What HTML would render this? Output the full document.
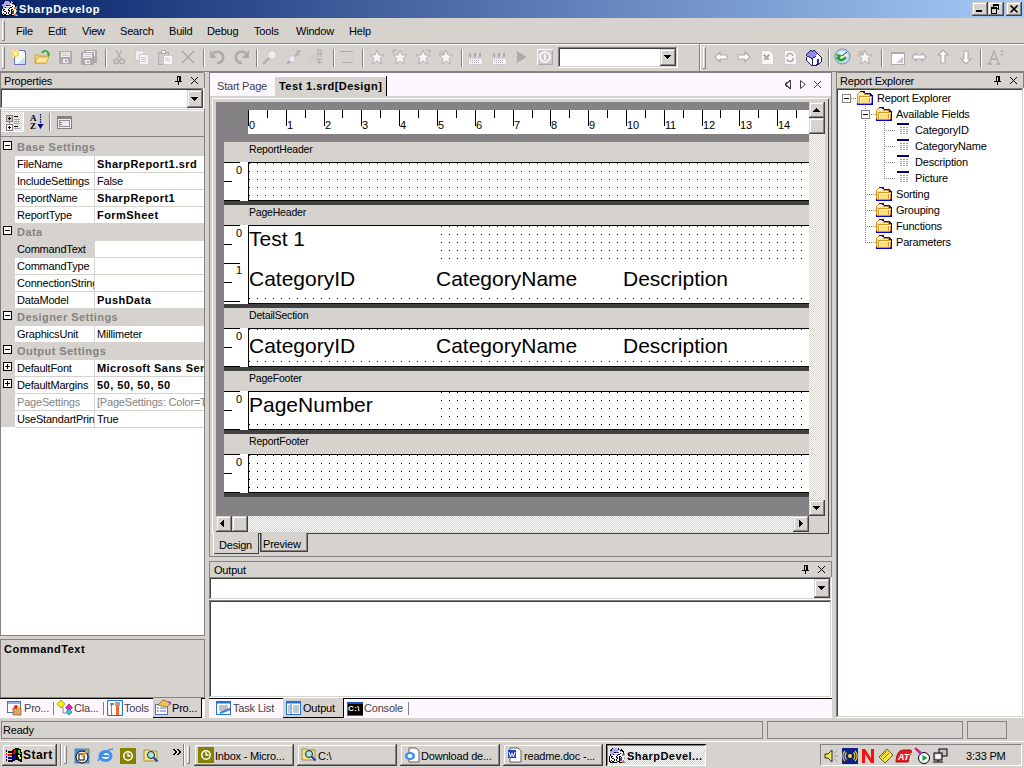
<!DOCTYPE html><html><head><meta charset="utf-8"><style>html,body{margin:0;padding:0;width:1024px;height:768px;overflow:hidden;background:#D6D2CE;position:relative}div{position:absolute;box-sizing:border-box}.t{line-height:0;white-space:nowrap;font-family:"Liberation Sans",sans-serif;font-size:11px;color:#000000;letter-spacing:-0.2px}svg{position:absolute}</style></head><body><div style="left:0px;top:0px;width:1024px;height:18px;background:linear-gradient(to right,#08246B,#A5CAF7)"></div><svg style="position:absolute;left:1px;top:0px" width="18" height="16" viewBox="0 0 18 16" shape-rendering="crispEdges"><path d="M3 1h1v1h-1zM9 1h1v1h-1zM2 2h1v1h-1zM9 2h1v1h-1zM12 2h1v1h-1zM1 3h2v1h-2zM11 3h3v1h-3zM13 4h2v1h-2zM5 5h2v1h-2zM14 5h1v1h-1zM11 6h1v1h-1zM14 6h1v1h-1zM1 7h1v1h-1zM4 7h1v1h-1zM9 7h2v1h-2zM1 8h1v1h-1zM8 8h1v1h-1zM0 9h1v1h-1zM2 9h2v1h-2zM7 9h1v1h-1zM10 9h2v1h-2zM0 10h1v1h-1zM2 10h1v1h-1zM7 10h2v1h-2zM10 10h1v1h-1zM0 11h1v1h-1zM3 11h2v1h-2zM8 11h1v1h-1zM10 11h1v1h-1zM0 12h1v1h-1zM5 12h1v1h-1zM7 12h1v1h-1zM10 12h1v1h-1zM0 13h1v1h-1zM2 13h1v1h-1zM5 13h1v1h-1zM7 13h1v1h-1zM10 13h1v1h-1zM0 14h2v1h-2zM3 14h2v1h-2zM8 14h3v1h-3zM1 15h7v1h-7zM10 15h3v1h-3z" fill="#000000"/><path d="M4 1h4v1h-4zM10 1h1v1h-1zM3 2h6v1h-6zM10 2h2v1h-2zM3 3h8v1h-8zM1 4h8v1h-8zM11 4h2v1h-2zM1 5h4v1h-4zM2 6h3v1h-3zM2 7h2v1h-2zM5 7h4v1h-4z" fill="#ADAAF7"/><path d="M9 4h2v1h-2zM10 5h4v1h-4zM5 6h6v1h-6zM13 6h1v1h-1zM11 7h2v1h-2zM2 8h6v1h-6zM9 8h4v1h-4zM1 9h1v1h-1zM4 9h3v1h-3zM8 9h2v1h-2zM12 9h3v1h-3zM1 10h1v1h-1zM3 10h4v1h-4zM9 10h1v1h-1zM13 10h2v1h-2zM1 11h2v1h-2zM5 11h3v1h-3zM9 11h1v1h-1zM13 11h2v1h-2zM1 12h4v1h-4zM6 12h1v1h-1zM8 12h2v1h-2zM13 12h2v1h-2zM1 13h1v1h-1zM3 13h2v1h-2zM6 13h1v1h-1zM8 13h2v1h-2zM13 13h1v1h-1zM2 14h1v1h-1zM5 14h3v1h-3zM11 14h2v1h-2z" fill="#FFFFFF"/><path d="M7 5h3v1h-3zM12 10h1v1h-1zM11 11h2v1h-2zM11 12h2v1h-2zM11 13h2v1h-2z" fill="#424184"/><path d="M12 6h1v1h-1zM11 10h1v1h-1z" fill="#F7F321"/><path d="M15 6h1v1h-1zM13 7h1v1h-1zM15 7h1v1h-1zM15 8h1v1h-1zM15 10h1v1h-1zM15 11h1v1h-1zM15 14h1v1h-1zM15 15h2v1h-2z" fill="#A5A2A5"/><path d="M14 7h1v1h-1zM13 8h2v1h-2zM14 13h1v1h-1zM13 14h2v1h-2zM13 15h2v1h-2z" fill="#F76110"/></svg><div class="t" style="left:19px;top:9px;font-size:11px;font-weight:bold;letter-spacing:0.45px;color:#FFFFFF;letter-spacing:0.6px">SharpDevelop</div><div style="left:972px;top:2px;width:16px;height:14px;background:#D6D2CE;box-shadow:inset -1px -1px #424142,inset 1px 1px #D6D2CE,inset -2px -2px #848284,inset 2px 2px #FFFFFF"></div><div style="left:988px;top:2px;width:16px;height:14px;background:#D6D2CE;box-shadow:inset -1px -1px #424142,inset 1px 1px #D6D2CE,inset -2px -2px #848284,inset 2px 2px #FFFFFF"></div><div style="left:1006px;top:2px;width:16px;height:14px;background:#D6D2CE;box-shadow:inset -1px -1px #424142,inset 1px 1px #D6D2CE,inset -2px -2px #848284,inset 2px 2px #FFFFFF"></div><svg style="position:absolute;left:976px;top:2px" width="10" height="14" viewBox="0 0 10 14" shape-rendering="crispEdges"><rect x="0" y="8" width="6" height="2" fill="#000000"/></svg><svg style="position:absolute;left:990px;top:2px" width="12" height="14" viewBox="0 0 12 14" shape-rendering="crispEdges"><rect x="3" y="2" width="6" height="2" fill="#000000"/><rect x="8" y="4" width="1" height="4" fill="#000000"/><rect x="7" y="6" width="2" height="1" fill="#000000"/><rect x="1" y="5" width="6" height="2" fill="#000000"/><rect x="1" y="7" width="1" height="4" fill="#000000"/><rect x="6" y="7" width="1" height="4" fill="#000000"/><rect x="1" y="11" width="6" height="1" fill="#000000"/><rect x="3" y="2" width="1" height="3" fill="#000000"/></svg><svg style="position:absolute;left:1006px;top:2px" width="16" height="14" viewBox="0 0 16 14"><path d="M4.5 3.5 L11.5 10.5 M11.5 3.5 L4.5 10.5" stroke="#000000" stroke-width="1.6"/></svg><div style="left:0px;top:18px;width:1024px;height:25px;background:#D6D2CE"></div><div style="left:2px;top:21px;width:3px;height:20px;box-shadow:inset -1px -1px #848284,inset 1px 1px #FFFFFF"></div><div style="left:0px;top:43px;width:1024px;height:1px;background:#848284"></div><div style="left:0px;top:44px;width:1024px;height:1px;background:#FFFFFF"></div><div class="t" style="left:16px;top:31px;font-size:11px;color:#000000;">File</div><div class="t" style="left:48px;top:31px;font-size:11px;color:#000000;">Edit</div><div class="t" style="left:82px;top:31px;font-size:11px;color:#000000;">View</div><div class="t" style="left:120px;top:31px;font-size:11px;color:#000000;">Search</div><div class="t" style="left:169px;top:31px;font-size:11px;color:#000000;">Build</div><div class="t" style="left:207px;top:31px;font-size:11px;color:#000000;">Debug</div><div class="t" style="left:254px;top:31px;font-size:11px;color:#000000;">Tools</div><div class="t" style="left:296px;top:31px;font-size:11px;color:#000000;">Window</div><div class="t" style="left:349px;top:31px;font-size:11px;color:#000000;">Help</div><div style="left:2px;top:47px;width:3px;height:22px;box-shadow:inset -1px -1px #848284,inset 1px 1px #FFFFFF"></div><div style="left:0px;top:71px;width:1024px;height:1px;background:#848284"></div><div style="left:0px;top:72px;width:204px;height:1px;background:#848284"></div><div style="left:209px;top:72px;width:623px;height:1px;background:#848284"></div><div style="left:836px;top:72px;width:188px;height:1px;background:#848284"></div><div style="left:105px;top:49px;width:1px;height:18px;background:#848284"></div><div style="left:106px;top:49px;width:1px;height:18px;background:#FFFFFF"></div><div style="left:203px;top:49px;width:1px;height:18px;background:#848284"></div><div style="left:204px;top:49px;width:1px;height:18px;background:#FFFFFF"></div><div style="left:256px;top:49px;width:1px;height:18px;background:#848284"></div><div style="left:257px;top:49px;width:1px;height:18px;background:#FFFFFF"></div><div style="left:333px;top:49px;width:1px;height:18px;background:#848284"></div><div style="left:334px;top:49px;width:1px;height:18px;background:#FFFFFF"></div><div style="left:362px;top:49px;width:1px;height:18px;background:#848284"></div><div style="left:363px;top:49px;width:1px;height:18px;background:#FFFFFF"></div><div style="left:461px;top:49px;width:1px;height:18px;background:#848284"></div><div style="left:462px;top:49px;width:1px;height:18px;background:#FFFFFF"></div><div style="left:828px;top:49px;width:1px;height:18px;background:#848284"></div><div style="left:829px;top:49px;width:1px;height:18px;background:#FFFFFF"></div><div style="left:881px;top:49px;width:1px;height:18px;background:#848284"></div><div style="left:882px;top:49px;width:1px;height:18px;background:#FFFFFF"></div><div style="left:980px;top:49px;width:1px;height:18px;background:#848284"></div><div style="left:981px;top:49px;width:1px;height:18px;background:#FFFFFF"></div><div style="left:699px;top:44px;width:1px;height:27px;background:#848284"></div><div style="left:700px;top:44px;width:1px;height:27px;background:#FFFFFF"></div><div style="left:703px;top:47px;width:3px;height:22px;box-shadow:inset -1px -1px #848284,inset 1px 1px #FFFFFF"></div><div style="left:558px;top:47px;width:120px;height:21px;background:#FFFFFF;box-shadow:inset -1px -1px #FFFFFF,inset 1px 1px #848284,inset -2px -2px #D6D2CE,inset 2px 2px #424142"></div><div style="left:660px;top:49px;width:16px;height:17px;background:#D6D2CE;box-shadow:inset -1px -1px #424142,inset 1px 1px #D6D2CE,inset -2px -2px #848284,inset 2px 2px #FFFFFF"></div><svg style="position:absolute;left:664px;top:55px" width="7" height="4" viewBox="0 0 7 4" shape-rendering="crispEdges"><path d="M0 0h7v1h-1v1h-1v1h-1v1h-1v-1h-1v-1h-1v-1h-1z" fill="#000000"/></svg><svg style="position:absolute;left:11px;top:49px" width="16" height="16" viewBox="0 0 16 16" shape-rendering="crispEdges"><path d="M1 1h3v1h-3zM5 1h3v1h-3zM1 2h1v1h-1zM3 2h3v1h-3zM7 2h1v1h-1zM1 3h7v1h-7zM2 4h2v1h-2zM5 4h2v1h-2zM1 5h7v1h-7zM1 6h1v1h-1zM3 6h3v1h-3zM7 6h1v1h-1zM1 7h3v1h-3zM5 7h3v1h-3z" fill="#FFEB94"/><path d="M4 1h1v1h-1zM2 2h1v1h-1zM6 2h1v1h-1zM1 4h1v1h-1zM7 4h1v1h-1zM2 6h1v1h-1zM6 6h1v1h-1zM4 7h1v1h-1z" fill="#F7A231"/><path d="M8 1h5v1h-5zM14 3h1v1h-1zM14 4h1v1h-1zM14 5h1v1h-1zM14 6h1v1h-1zM14 7h1v1h-1zM3 8h1v1h-1zM14 8h1v1h-1zM3 9h1v1h-1zM14 9h1v1h-1zM3 10h1v1h-1zM14 10h1v1h-1zM3 11h1v1h-1zM14 11h1v1h-1zM3 12h1v1h-1zM14 12h1v1h-1zM3 13h1v1h-1zM14 13h1v1h-1zM3 14h1v1h-1zM14 14h1v1h-1zM3 15h12v1h-12z" fill="#7371BD"/><path d="M13 1h1v1h-1zM13 2h2v1h-2z" fill="#5292E6"/><path d="M8 2h5v1h-5zM8 3h6v1h-6zM8 4h6v1h-6zM8 5h6v1h-6zM8 6h6v1h-6zM8 7h6v1h-6zM4 8h10v1h-10zM4 9h8v1h-8zM13 9h1v1h-1zM4 10h7v1h-7zM4 11h6v1h-6zM4 12h5v1h-5zM4 13h4v1h-4zM4 14h3v1h-3z" fill="#EFF7FF"/><path d="M4 4h1v1h-1z" fill="#FFFFFF"/><path d="M12 9h1v1h-1zM11 10h3v1h-3zM10 11h4v1h-4zM9 12h5v1h-5zM8 13h6v1h-6zM7 14h7v1h-7z" fill="#C5E3FF"/></svg><svg style="position:absolute;left:34px;top:49px" width="17" height="16" viewBox="0 0 17 16"><path d="M1 6h5l1 1h5v7H1z" fill="#F7D27B" stroke="#CE9A29" stroke-width="0.8"/><path d="M1 14l3-6h11l-3 6z" fill="#FFE79C" stroke="#CE9A29" stroke-width="0.8"/><path d="M8 4c2-3 5-3 7 1" fill="none" stroke="#3AAA3A" stroke-width="2"/><path d="M12.5 5l4 0-2 3z" fill="#3AAA3A"/></svg><svg style="position:absolute;left:58px;top:49px" width="16" height="16" viewBox="0 0 16 16" shape-rendering="crispEdges"><rect x="1" y="2" width="13" height="13" fill="#ADAAAD"/><rect x="3" y="3" width="9" height="5" fill="#EFEBEF"/><rect x="4" y="4" width="7" height="1" fill="#CECACE"/><rect x="4" y="6" width="7" height="1" fill="#CECACE"/><rect x="5" y="10" width="5" height="4" fill="#EFEBEF"/><rect x="7" y="11" width="2" height="2" fill="#ADAAAD"/></svg><svg style="position:absolute;left:83px;top:48px" width="16" height="16" viewBox="0 0 16 16" shape-rendering="crispEdges"><rect x="1" y="2" width="13" height="13" fill="#ADAAAD"/><rect x="3" y="3" width="9" height="5" fill="#EFEBEF"/><rect x="4" y="4" width="7" height="1" fill="#CECACE"/><rect x="4" y="6" width="7" height="1" fill="#CECACE"/><rect x="5" y="10" width="5" height="4" fill="#EFEBEF"/><rect x="7" y="11" width="2" height="2" fill="#ADAAAD"/></svg><svg style="position:absolute;left:80px;top:50px" width="16" height="16" viewBox="0 0 16 16" shape-rendering="crispEdges"><rect x="1" y="2" width="13" height="13" fill="#ADAAAD"/><rect x="3" y="3" width="9" height="5" fill="#EFEBEF"/><rect x="4" y="4" width="7" height="1" fill="#CECACE"/><rect x="4" y="6" width="7" height="1" fill="#CECACE"/><rect x="5" y="10" width="5" height="4" fill="#EFEBEF"/><rect x="7" y="11" width="2" height="2" fill="#ADAAAD"/></svg><svg style="position:absolute;left:112px;top:49px" width="14" height="16" viewBox="0 0 14 16"><path d="M4 1l5 9M10 1L5 10" stroke="#ADAAAD" stroke-width="1.2"/><circle cx="4" cy="12.5" r="2.3" fill="none" stroke="#ADAAAD" stroke-width="1.3"/><circle cx="10" cy="12.5" r="2.3" fill="none" stroke="#ADAAAD" stroke-width="1.3"/></svg><svg style="position:absolute;left:134px;top:49px" width="16" height="16" viewBox="0 0 16 16" shape-rendering="crispEdges"><rect x="1" y="1" width="8" height="10" fill="#EFEBEF" stroke="#CECACE"/><rect x="5" y="5" width="9" height="10" fill="#F7F3F7" stroke="#CECACE"/><path d="M7 8h5M7 10h5M7 12h5" stroke="#CECACE"/></svg><svg style="position:absolute;left:157px;top:49px" width="16" height="16" viewBox="0 0 16 16" shape-rendering="crispEdges"><rect x="1" y="3" width="10" height="12" fill="#CECACE" stroke="#ADAAAD"/><rect x="4" y="1" width="4" height="3" fill="#EFEBEF" stroke="#ADAAAD"/><rect x="6" y="6" width="9" height="9" fill="#F7F3F7" stroke="#CECACE"/><path d="M8 9h5M8 11h5" stroke="#CECACE"/></svg><svg style="position:absolute;left:180px;top:49px" width="16" height="16" viewBox="0 0 16 16"><path d="M2 2l12 12M14 2L2 14" stroke="#ADAAAD" stroke-width="1.6"/></svg><svg style="position:absolute;left:209px;top:49px" width="17" height="16" viewBox="0 0 17 16"><path d="M4 4c6-3 11 0 10 6c-1 3-4 4-6 4" fill="none" stroke="#ADAAAD" stroke-width="2.6"/><path d="M1 1v8h7z" fill="#ADAAAD"/></svg><svg style="position:absolute;left:233px;top:49px" width="17" height="16" viewBox="0 0 17 16"><path d="M13 4c-6-3-11 0-10 6c1 3 4 4 6 4" fill="none" stroke="#ADAAAD" stroke-width="2.6"/><path d="M16 1v8h-7z" fill="#ADAAAD"/></svg><svg style="position:absolute;left:262px;top:49px" width="16" height="16" viewBox="0 0 16 16"><circle cx="10" cy="6" r="4.5" fill="#EFEBEF" stroke="#CECACE" stroke-width="1.5"/><path d="M7 9l-6 6" stroke="#ADAAAD" stroke-width="2"/></svg><svg style="position:absolute;left:286px;top:49px" width="16" height="16" viewBox="0 0 16 16"><circle cx="6" cy="10" r="3.5" fill="#EFEBEF" stroke="#CECACE" stroke-width="1.5"/><path d="M4 12l-3 3" stroke="#ADAAAD" stroke-width="2"/><path d="M10 2h4l-4 4h4M9 7l3-3" stroke="#ADAAAD" stroke-width="1.2" fill="none"/></svg><svg style="position:absolute;left:308px;top:49px" width="17" height="16" viewBox="0 0 17 16"><text x="0" y="12" font-family="Liberation Sans" font-size="12" font-weight="bold" fill="#CECACE">a</text><path d="M9 1h5M10 1v7M13 1v7M9 5h5M8 10h7M11 10v5M9 13h5" stroke="#ADAAAD" stroke-width="1" fill="none"/></svg><svg style="position:absolute;left:339px;top:49px" width="16" height="16" viewBox="0 0 16 16" shape-rendering="crispEdges"><rect x="1" y="2" width="13" height="1" fill="#ADAAAD"/><rect x="5" y="6" width="9" height="1" fill="#CECACE"/><rect x="5" y="9" width="9" height="1" fill="#CECACE"/><rect x="3" y="13" width="11" height="1" fill="#ADAAAD"/></svg><svg style="position:absolute;left:369px;top:49px" width="16" height="16" viewBox="0 0 16 16"><path d="M8 1l2 5h5l-4 3.5 1.5 5.5L8 12l-4.5 3 1.5-5.5L1 6h5z" fill="#F7F3F7" stroke="#ADAAAD" stroke-width="0.9"/></svg><svg style="position:absolute;left:392px;top:49px" width="16" height="16" viewBox="0 0 16 16"><path d="M8 1l2 5h5l-4 3.5 1.5 5.5L8 12l-4.5 3 1.5-5.5L1 6h5z" fill="#F7F3F7" stroke="#ADAAAD" stroke-width="0.9"/><path d="M1 1h4M1 1v3" stroke="#ADAAAD"/></svg><svg style="position:absolute;left:415px;top:49px" width="16" height="16" viewBox="0 0 16 16"><path d="M8 1l2 5h5l-4 3.5 1.5 5.5L8 12l-4.5 3 1.5-5.5L1 6h5z" fill="#F7F3F7" stroke="#ADAAAD" stroke-width="0.9"/><path d="M11 1h4v3" stroke="#ADAAAD" fill="none"/></svg><svg style="position:absolute;left:438px;top:49px" width="16" height="16" viewBox="0 0 16 16"><path d="M8 1l2 5h5l-4 3.5 1.5 5.5L8 12l-4.5 3 1.5-5.5L1 6h5z" fill="#F7F3F7" stroke="#ADAAAD" stroke-width="0.9"/><text x="1" y="6" font-size="5" fill="#ADAAAD" font-family="Liberation Sans">30</text></svg><svg style="position:absolute;left:467px;top:49px" width="16" height="16" viewBox="0 0 16 16" shape-rendering="crispEdges"><rect x="1" y="9" width="14" height="6" fill="#F7F7F7" stroke="#CECACE"/><path d="M3 11h1M5 11h1M7 11h1M9 11h1M11 11h1M3 13h1M5 13h1M7 13h1M9 13h1M11 13h1" stroke="#ADAAAD"/><path d="M3 4v4M8 4v4M13 4v4" stroke="#ADAAAD" stroke-width="2"/></svg><svg style="position:absolute;left:491px;top:49px" width="16" height="16" viewBox="0 0 16 16" shape-rendering="crispEdges"><rect x="1" y="9" width="14" height="6" fill="#F7F7F7" stroke="#CECACE"/><path d="M3 11h1M5 11h1M7 11h1M9 11h1M11 11h1M3 13h1M5 13h1M7 13h1M9 13h1M11 13h1" stroke="#ADAAAD"/><path d="M3 4v4M8 4v4M13 4v4" stroke="#ADAAAD" stroke-width="2"/></svg><svg style="position:absolute;left:516px;top:49px" width="12" height="16" viewBox="0 0 12 16" shape-rendering="crispEdges"><path d="M1 2l10 6-10 6z" fill="#ADAAAD"/></svg><div style="left:537px;top:49px;width:16px;height:16px;background:#CECACE;box-shadow:inset 1px 1px #FFFFFF,inset -1px -1px #ADAAAD"></div><svg style="position:absolute;left:537px;top:49px" width="16" height="16" viewBox="0 0 16 16"><circle cx="8" cy="8" r="5" fill="none" stroke="#FFFFFF" stroke-width="1.6"/><rect x="7" y="5" width="2" height="6" fill="#FFFFFF"/></svg><svg style="position:absolute;left:714px;top:49px" width="14" height="16" viewBox="0 0 14 16"><path d="M1 8l5-5v3h7v4H6v3z" fill="#FFFFFF" stroke="#ADAAAD" stroke-width="1.1"/></svg><svg style="position:absolute;left:737px;top:49px" width="14" height="16" viewBox="0 0 14 16"><path d="M13 8l-5-5v3H1v4h7v3z" fill="#FFFFFF" stroke="#ADAAAD" stroke-width="1.1"/></svg><svg style="position:absolute;left:760px;top:49px" width="14" height="16" viewBox="0 0 14 16" shape-rendering="crispEdges"><path d="M1 1h8l4 4v10H1z" fill="#F7F7F7" stroke="#CECACE"/><path d="M4 6l5 5M9 6l-5 5" stroke="#ADAAAD" stroke-width="1.5"/></svg><svg style="position:absolute;left:783px;top:49px" width="14" height="16" viewBox="0 0 14 16" shape-rendering="crispEdges"><path d="M1 1h8l4 4v10H1z" fill="#F7F7F7" stroke="#CECACE"/></svg><svg style="position:absolute;left:783px;top:49px" width="14" height="16" viewBox="0 0 14 16"><path d="M4 8a3 3 0 0 1 6-1M10 9a3 3 0 0 1-6 1" stroke="#ADAAAD" stroke-width="1.5" fill="none"/></svg><svg style="position:absolute;left:806px;top:50px" width="16" height="16" viewBox="0 0 16 16" shape-rendering="crispEdges"><path d="M4 0h2v1h-2zM7 0h2v1h-2zM3 1h1v1h-1zM6 1h1v1h-1zM9 1h1v1h-1zM2 2h1v1h-1zM10 2h1v1h-1zM1 3h1v1h-1zM11 3h1v1h-1zM0 4h1v1h-1zM12 4h1v1h-1zM0 5h1v1h-1zM13 5h1v1h-1zM1 6h2v1h-2zM9 6h1v1h-1zM14 6h1v1h-1zM0 7h1v1h-1zM3 7h2v1h-2zM7 7h2v1h-2zM15 7h1v1h-1zM0 8h1v1h-1zM5 8h2v1h-2zM15 8h1v1h-1zM0 9h1v1h-1zM6 9h1v1h-1zM15 9h1v1h-1zM0 10h1v1h-1zM6 10h1v1h-1zM15 10h1v1h-1zM1 11h1v1h-1zM6 11h1v1h-1zM15 11h1v1h-1zM2 12h1v1h-1zM6 12h1v1h-1zM14 12h1v1h-1zM3 13h1v1h-1zM6 13h1v1h-1zM13 13h1v1h-1zM4 14h1v1h-1zM6 14h1v1h-1zM10 14h3v1h-3zM5 15h6v1h-6z" fill="#212063"/><path d="M4 1h2v1h-2zM7 1h2v1h-2zM3 2h7v1h-7zM2 3h9v1h-9zM1 4h10v1h-10zM1 5h9v1h-9zM3 6h6v1h-6zM5 7h2v1h-2z" fill="#8C8AEF"/><path d="M11 4h1v1h-1zM10 5h3v1h-3zM10 6h4v1h-4zM1 7h2v1h-2zM9 7h6v1h-6zM1 8h4v1h-4zM7 8h8v1h-8zM1 9h5v1h-5zM7 9h4v1h-4zM13 9h2v1h-2zM1 10h5v1h-5zM7 10h4v1h-4zM13 10h2v1h-2zM2 11h4v1h-4zM7 11h4v1h-4zM13 11h2v1h-2zM3 12h3v1h-3zM7 12h4v1h-4zM13 12h1v1h-1zM4 13h2v1h-2zM7 13h4v1h-4zM5 14h1v1h-1zM7 14h3v1h-3z" fill="#FFFFFF"/><path d="M11 9h2v1h-2zM11 10h2v1h-2zM11 11h2v1h-2zM11 12h2v1h-2zM11 13h2v1h-2z" fill="#31318C"/></svg><svg style="position:absolute;left:834px;top:48px" width="17" height="17" viewBox="0 0 17 17"><circle cx="8.5" cy="8.5" r="7.5" fill="#BDDBF7" stroke="#738AAD"/><circle cx="8.5" cy="8.5" r="5" fill="#EFF3FF"/><path d="M3 9c2 4 6 4 9 0" stroke="#21A221" stroke-width="2.5" fill="none"/><path d="M2 6l3 5 3-4z" fill="#21A221"/><path d="M8 8l5-4" stroke="#213142"/></svg><svg style="position:absolute;left:857px;top:49px" width="16" height="16" viewBox="0 0 16 16"><path d="M8 1l2 5h5l-4 3.5 1.5 5.5L8 12l-4.5 3 1.5-5.5L1 6h5z" fill="#F7F3F7" stroke="#ADAAAD" stroke-width="0.9"/><text x="1" y="6" font-size="5" fill="#ADAAAD" font-family="Liberation Sans">30</text></svg><svg style="position:absolute;left:890px;top:49px" width="16" height="16" viewBox="0 0 16 16" shape-rendering="crispEdges"><rect x="1" y="3" width="13" height="12" fill="#FFFBFF" stroke="#ADAAAD"/><rect x="1" y="3" width="13" height="2" fill="#ADAAAD"/><path d="M13 7L6 14h7z" fill="#CECACE"/></svg><svg style="position:absolute;left:911px;top:49px" width="16" height="16" viewBox="0 0 16 16"><path d="M1 8l4-4v2h6V4l4 4-4 4v-2H5v2z" fill="#FFFFFF" stroke="#ADAAAD" stroke-width="1.1"/></svg><svg style="position:absolute;left:936px;top:49px" width="14" height="16" viewBox="0 0 14 16"><path d="M7 1l5 5H9v8H5V6H2z" fill="#FFFFFF" stroke="#ADAAAD" stroke-width="1.1"/></svg><svg style="position:absolute;left:959px;top:49px" width="14" height="16" viewBox="0 0 14 16"><path d="M7 15l5-5H9V2H5v8H2z" fill="#FFFFFF" stroke="#ADAAAD" stroke-width="1.1"/></svg><svg style="position:absolute;left:986px;top:49px" width="18" height="16" viewBox="0 0 18 16"><path d="M1 15h5M10 15h5M3 15L8 2l5 13M5 10h6" stroke="#ADAAAD" stroke-width="1.3" fill="none"/><path d="M14 3l2-2 2 2zM14 5l2 2 2-2z" fill="#ADAAAD"/></svg><div style="left:0px;top:73px;width:1px;height:563px;background:#848284"></div><div style="left:204px;top:73px;width:1px;height:15px;background:#848284"></div><div style="left:204px;top:109px;width:1px;height:527px;background:#848284"></div><div class="t" style="left:4px;top:81px;font-size:11px;color:#000000;">Properties</div><svg style="position:absolute;left:175px;top:76px" width="7" height="9" viewBox="0 0 7 9" shape-rendering="crispEdges"><rect x="2" y="0" width="4" height="1" fill="#000000"/><rect x="2" y="0" width="1" height="5" fill="#000000"/><rect x="4" y="0" width="2" height="5" fill="#000000"/><rect x="0" y="5" width="7" height="1" fill="#000000"/><rect x="3" y="6" width="1" height="3" fill="#000000"/></svg><svg style="position:absolute;left:191px;top:77px" width="7" height="7" viewBox="0 0 7 7" shape-rendering="crispEdges"><rect x="0" y="0" width="1" height="1" fill="#000000"/><rect x="6" y="0" width="1" height="1" fill="#000000"/><rect x="1" y="1" width="1" height="1" fill="#000000"/><rect x="5" y="1" width="1" height="1" fill="#000000"/><rect x="2" y="2" width="1" height="1" fill="#000000"/><rect x="4" y="2" width="1" height="1" fill="#000000"/><rect x="3" y="3" width="1" height="1" fill="#000000"/><rect x="3" y="3" width="1" height="1" fill="#000000"/><rect x="4" y="4" width="1" height="1" fill="#000000"/><rect x="2" y="4" width="1" height="1" fill="#000000"/><rect x="5" y="5" width="1" height="1" fill="#000000"/><rect x="1" y="5" width="1" height="1" fill="#000000"/><rect x="6" y="6" width="1" height="1" fill="#000000"/><rect x="0" y="6" width="1" height="1" fill="#000000"/></svg><div style="left:0px;top:88px;width:204px;height:21px;background:#FFFFFF;box-shadow:inset -1px -1px #FFFFFF,inset 1px 1px #848284,inset -2px -2px #D6D2CE,inset 2px 2px #424142"></div><div style="left:187px;top:90px;width:16px;height:18px;background:#D6D2CE;box-shadow:inset -1px -1px #424142,inset 1px 1px #D6D2CE,inset -2px -2px #848284,inset 2px 2px #FFFFFF"></div><svg style="position:absolute;left:191px;top:97px" width="7" height="4" viewBox="0 0 7 4" shape-rendering="crispEdges"><path d="M0 0h7v1h-1v1h-1v1h-1v1h-1v-1h-1v-1h-1v-1h-1z" fill="#000000"/></svg><div style="left:1px;top:110px;width:203px;height:1px;background:#FFFFFF"></div><div style="left:1px;top:112px;width:23px;height:20px;background-color:#FFFFFF;background-image:linear-gradient(45deg,#D6D2CE 25%,transparent 25%,transparent 75%,#D6D2CE 75%),linear-gradient(45deg,#D6D2CE 25%,transparent 25%,transparent 75%,#D6D2CE 75%);background-size:2px 2px;background-position:0 0,1px 1px;box-shadow:inset -1px -1px #FFFFFF"></div><svg style="position:absolute;left:6px;top:115px" width="16" height="16" viewBox="0 0 16 16" shape-rendering="crispEdges"><rect x="0" y="0" width="6" height="6" fill="#C5C2C5" stroke="#848284"/><path d="M3 1.5v3M1.5 3h3" stroke="#000000"/><rect x="0" y="9" width="6" height="6" fill="#FFFFFF" stroke="#848284"/><path d="M3 10.5v3M1.5 12h3" stroke="#000000"/><path d="M3 6v3" stroke="#848284"/><rect x="8" y="1" width="4" height="1" fill="#000000"/><rect x="8" y="4" width="6" height="1" fill="#A5A2A5"/><rect x="8" y="6" width="6" height="1" fill="#A5A2A5"/><rect x="8" y="8" width="6" height="1" fill="#A5A2A5"/><rect x="8" y="11" width="4" height="1" fill="#000000"/><rect x="8" y="13" width="6" height="1" fill="#A5A2A5"/></svg><svg style="position:absolute;left:29px;top:113px" width="16" height="18" viewBox="0 0 16 18"><text x="1" y="8" font-family="Liberation Serif" font-weight="bold" font-size="9" fill="#000000">A</text><text x="1" y="16" font-family="Liberation Serif" font-weight="bold" font-size="9" fill="#000000">Z</text><path d="M11.5 1v13" stroke="#000084" stroke-width="1.2" stroke-dasharray="1.5 1"/><path d="M8.5 11h6l-3 5z" fill="#000084"/></svg><div style="left:49px;top:113px;width:1px;height:18px;background:#848284"></div><div style="left:50px;top:113px;width:1px;height:18px;background:#FFFFFF"></div><svg style="position:absolute;left:57px;top:116px" width="15" height="13" viewBox="0 0 15 13" shape-rendering="crispEdges"><rect x="0.5" y="0.5" width="14" height="12" fill="#EFEBEF" stroke="#848284"/><rect x="0.5" y="0.5" width="14" height="2" fill="#848284"/><rect x="2.5" y="4.5" width="10" height="6" fill="none" stroke="#949294"/><path d="M3 6h2M3 8h2" stroke="#848284"/></svg><div style="left:1px;top:136px;width:203px;height:1px;background:#848284"></div><div style="left:1px;top:137px;width:203px;height:498px;background:#FFFFFF"></div><div style="left:1px;top:137px;width:203px;height:18px;background:#D6D2CE"></div><svg style="position:absolute;left:3px;top:141px" width="9" height="9" viewBox="0 0 9 9" shape-rendering="crispEdges"><rect x="0.5" y="0.5" width="8" height="8" fill="#FFFFFF" stroke="#000000"/><rect x="2" y="4" width="5" height="1" fill="#000000"/></svg><div class="t" style="left:17px;top:147px;font-size:11px;font-weight:bold;letter-spacing:0.45px;color:#848284;">Base Settings</div><div style="left:1px;top:155px;width:14px;height:17px;background:#D6D2CE"></div><div style="left:15px;top:155px;width:189px;height:1px;background:#D6D2CE"></div><div style="left:94px;top:155px;width:1px;height:17px;background:#D6D2CE"></div><div style="left:15px;top:156px;width:79px;height:16px;overflow:hidden"><div class="t" style="left:2px;top:8px;color:#000000">FileName</div></div><div style="left:95px;top:156px;width:109px;height:16px;overflow:hidden"><div class="t" style="left:2px;top:8px;color:#000000;font-weight:bold;letter-spacing:0.45px;">SharpReport1.srd</div></div><div style="left:1px;top:172px;width:14px;height:17px;background:#D6D2CE"></div><div style="left:15px;top:172px;width:189px;height:1px;background:#D6D2CE"></div><div style="left:94px;top:172px;width:1px;height:17px;background:#D6D2CE"></div><div style="left:15px;top:173px;width:79px;height:16px;overflow:hidden"><div class="t" style="left:2px;top:8px;color:#000000">IncludeSettings</div></div><div style="left:95px;top:173px;width:109px;height:16px;overflow:hidden"><div class="t" style="left:2px;top:8px;color:#000000;">False</div></div><div style="left:1px;top:189px;width:14px;height:17px;background:#D6D2CE"></div><div style="left:15px;top:189px;width:189px;height:1px;background:#D6D2CE"></div><div style="left:94px;top:189px;width:1px;height:17px;background:#D6D2CE"></div><div style="left:15px;top:190px;width:79px;height:16px;overflow:hidden"><div class="t" style="left:2px;top:8px;color:#000000">ReportName</div></div><div style="left:95px;top:190px;width:109px;height:16px;overflow:hidden"><div class="t" style="left:2px;top:8px;color:#000000;font-weight:bold;letter-spacing:0.45px;">SharpReport1</div></div><div style="left:1px;top:206px;width:14px;height:17px;background:#D6D2CE"></div><div style="left:15px;top:206px;width:189px;height:1px;background:#D6D2CE"></div><div style="left:94px;top:206px;width:1px;height:17px;background:#D6D2CE"></div><div style="left:15px;top:207px;width:79px;height:16px;overflow:hidden"><div class="t" style="left:2px;top:8px;color:#000000">ReportType</div></div><div style="left:95px;top:207px;width:109px;height:16px;overflow:hidden"><div class="t" style="left:2px;top:8px;color:#000000;font-weight:bold;letter-spacing:0.45px;">FormSheet</div></div><div style="left:1px;top:223px;width:203px;height:17px;background:#D6D2CE"></div><svg style="position:absolute;left:3px;top:226px" width="9" height="9" viewBox="0 0 9 9" shape-rendering="crispEdges"><rect x="0.5" y="0.5" width="8" height="8" fill="#FFFFFF" stroke="#000000"/><rect x="2" y="4" width="5" height="1" fill="#000000"/></svg><div class="t" style="left:17px;top:232px;font-size:11px;font-weight:bold;letter-spacing:0.45px;color:#848284;">Data</div><div style="left:1px;top:240px;width:14px;height:17px;background:#D6D2CE"></div><div style="left:15px;top:240px;width:189px;height:1px;background:#D6D2CE"></div><div style="left:94px;top:240px;width:1px;height:17px;background:#D6D2CE"></div><div style="left:15px;top:241px;width:79px;height:16px;background:#D6D2CE"></div><div style="left:15px;top:241px;width:79px;height:16px;overflow:hidden"><div class="t" style="left:2px;top:8px;color:#000000">CommandText</div></div><div style="left:1px;top:257px;width:14px;height:17px;background:#D6D2CE"></div><div style="left:15px;top:257px;width:189px;height:1px;background:#D6D2CE"></div><div style="left:94px;top:257px;width:1px;height:17px;background:#D6D2CE"></div><div style="left:15px;top:258px;width:79px;height:16px;overflow:hidden"><div class="t" style="left:2px;top:8px;color:#000000">CommandType</div></div><div style="left:1px;top:274px;width:14px;height:17px;background:#D6D2CE"></div><div style="left:15px;top:274px;width:189px;height:1px;background:#D6D2CE"></div><div style="left:94px;top:274px;width:1px;height:17px;background:#D6D2CE"></div><div style="left:15px;top:275px;width:79px;height:16px;overflow:hidden"><div class="t" style="left:2px;top:8px;color:#000000">ConnectionString</div></div><div style="left:1px;top:291px;width:14px;height:17px;background:#D6D2CE"></div><div style="left:15px;top:291px;width:189px;height:1px;background:#D6D2CE"></div><div style="left:94px;top:291px;width:1px;height:17px;background:#D6D2CE"></div><div style="left:15px;top:292px;width:79px;height:16px;overflow:hidden"><div class="t" style="left:2px;top:8px;color:#000000">DataModel</div></div><div style="left:95px;top:292px;width:109px;height:16px;overflow:hidden"><div class="t" style="left:2px;top:8px;color:#000000;font-weight:bold;letter-spacing:0.45px;">PushData</div></div><div style="left:1px;top:308px;width:203px;height:17px;background:#D6D2CE"></div><svg style="position:absolute;left:3px;top:311px" width="9" height="9" viewBox="0 0 9 9" shape-rendering="crispEdges"><rect x="0.5" y="0.5" width="8" height="8" fill="#FFFFFF" stroke="#000000"/><rect x="2" y="4" width="5" height="1" fill="#000000"/></svg><div class="t" style="left:17px;top:317px;font-size:11px;font-weight:bold;letter-spacing:0.45px;color:#848284;">Designer Settings</div><div style="left:1px;top:325px;width:14px;height:17px;background:#D6D2CE"></div><div style="left:15px;top:325px;width:189px;height:1px;background:#D6D2CE"></div><div style="left:94px;top:325px;width:1px;height:17px;background:#D6D2CE"></div><div style="left:15px;top:326px;width:79px;height:16px;overflow:hidden"><div class="t" style="left:2px;top:8px;color:#000000">GraphicsUnit</div></div><div style="left:95px;top:326px;width:109px;height:16px;overflow:hidden"><div class="t" style="left:2px;top:8px;color:#000000;">Millimeter</div></div><div style="left:1px;top:342px;width:203px;height:17px;background:#D6D2CE"></div><svg style="position:absolute;left:3px;top:345px" width="9" height="9" viewBox="0 0 9 9" shape-rendering="crispEdges"><rect x="0.5" y="0.5" width="8" height="8" fill="#FFFFFF" stroke="#000000"/><rect x="2" y="4" width="5" height="1" fill="#000000"/></svg><div class="t" style="left:17px;top:351px;font-size:11px;font-weight:bold;letter-spacing:0.45px;color:#848284;">Output Settings</div><div style="left:1px;top:359px;width:14px;height:17px;background:#D6D2CE"></div><div style="left:15px;top:359px;width:189px;height:1px;background:#D6D2CE"></div><div style="left:94px;top:359px;width:1px;height:17px;background:#D6D2CE"></div><svg style="position:absolute;left:3px;top:362px" width="9" height="9" viewBox="0 0 9 9" shape-rendering="crispEdges"><rect x="0.5" y="0.5" width="8" height="8" fill="#FFFFFF" stroke="#000000"/><rect x="2" y="4" width="5" height="1" fill="#000000"/><rect x="4" y="2" width="1" height="5" fill="#000000"/></svg><div style="left:15px;top:360px;width:79px;height:16px;overflow:hidden"><div class="t" style="left:2px;top:8px;color:#000000">DefaultFont</div></div><div style="left:95px;top:360px;width:109px;height:16px;overflow:hidden"><div class="t" style="left:2px;top:8px;color:#000000;font-weight:bold;letter-spacing:0.45px;">Microsoft Sans Serif, 8.25pt</div></div><div style="left:1px;top:376px;width:14px;height:17px;background:#D6D2CE"></div><div style="left:15px;top:376px;width:189px;height:1px;background:#D6D2CE"></div><div style="left:94px;top:376px;width:1px;height:17px;background:#D6D2CE"></div><svg style="position:absolute;left:3px;top:379px" width="9" height="9" viewBox="0 0 9 9" shape-rendering="crispEdges"><rect x="0.5" y="0.5" width="8" height="8" fill="#FFFFFF" stroke="#000000"/><rect x="2" y="4" width="5" height="1" fill="#000000"/><rect x="4" y="2" width="1" height="5" fill="#000000"/></svg><div style="left:15px;top:377px;width:79px;height:16px;overflow:hidden"><div class="t" style="left:2px;top:8px;color:#000000">DefaultMargins</div></div><div style="left:95px;top:377px;width:109px;height:16px;overflow:hidden"><div class="t" style="left:2px;top:8px;color:#000000;font-weight:bold;letter-spacing:0.45px;">50, 50, 50, 50</div></div><div style="left:1px;top:393px;width:14px;height:17px;background:#D6D2CE"></div><div style="left:15px;top:393px;width:189px;height:1px;background:#D6D2CE"></div><div style="left:94px;top:393px;width:1px;height:17px;background:#D6D2CE"></div><div style="left:15px;top:394px;width:79px;height:16px;overflow:hidden"><div class="t" style="left:2px;top:8px;color:#848284">PageSettings</div></div><div style="left:95px;top:394px;width:109px;height:16px;overflow:hidden"><div class="t" style="left:2px;top:8px;color:#848284;">[PageSettings: Color=True, Landscape=False]</div></div><div style="left:1px;top:410px;width:14px;height:17px;background:#D6D2CE"></div><div style="left:15px;top:410px;width:189px;height:1px;background:#D6D2CE"></div><div style="left:94px;top:410px;width:1px;height:17px;background:#D6D2CE"></div><div style="left:15px;top:411px;width:79px;height:16px;overflow:hidden"><div class="t" style="left:2px;top:8px;color:#000000">UseStandartPrinter</div></div><div style="left:95px;top:411px;width:109px;height:16px;overflow:hidden"><div class="t" style="left:2px;top:8px;color:#000000;">True</div></div><div style="left:15px;top:427px;width:189px;height:1px;background:#D6D2CE"></div><div style="left:0px;top:635px;width:205px;height:1px;background:#848284"></div><div style="left:0px;top:639px;width:205px;height:59px;background:#D6D2CE;border:1px solid #848284"></div><div class="t" style="left:4px;top:649px;font-size:11px;font-weight:bold;letter-spacing:0.45px;color:#000000;letter-spacing:0.5px">CommandText</div><div style="left:0px;top:698px;width:205px;height:1px;background:#000000"></div><div style="left:0px;top:699px;width:205px;height:19px;background:#FFF7FF"></div><div style="left:209px;top:73px;width:1px;height:484px;background:#848284"></div><div style="left:831px;top:73px;width:1px;height:484px;background:#848284"></div><div style="left:209px;top:556px;width:623px;height:1px;background:#848284"></div><div style="left:210px;top:73px;width:621px;height:23px;background:#FFF7FF"></div><div class="t" style="left:217px;top:86px;font-size:11px;color:#424142;">Start Page</div><div style="left:275px;top:77px;width:111px;height:19px;background:#D6D2CE"></div><div class="t" style="left:279px;top:86px;font-size:11px;font-weight:bold;letter-spacing:0.45px;color:#000000;">Test 1.srd[Design]</div><div style="left:386px;top:76px;width:1px;height:20px;background:#000000"></div><svg style="position:absolute;left:785px;top:80px" width="6" height="9" viewBox="0 0 6 9" shape-rendering="crispEdges"><path d="M5 0v9M5 0L0 4.5 5 9" stroke="#424142" fill="none" stroke-width="1"/></svg><svg style="position:absolute;left:785px;top:80px" width="6" height="9" viewBox="0 0 6 9"><path d="M5.5 0.5v8L0.8 4.5z" fill="none" stroke="#424142" stroke-width="1"/></svg><svg style="position:absolute;left:800px;top:80px" width="6" height="9" viewBox="0 0 6 9"><path d="M0.5 0.5v8L5.2 4.5z" fill="none" stroke="#424142" stroke-width="1"/></svg><svg style="position:absolute;left:814px;top:81px" width="7" height="7" viewBox="0 0 7 7" shape-rendering="crispEdges"><rect x="0" y="0" width="1" height="1" fill="#424142"/><rect x="6" y="0" width="1" height="1" fill="#424142"/><rect x="1" y="1" width="1" height="1" fill="#424142"/><rect x="5" y="1" width="1" height="1" fill="#424142"/><rect x="2" y="2" width="1" height="1" fill="#424142"/><rect x="4" y="2" width="1" height="1" fill="#424142"/><rect x="3" y="3" width="1" height="1" fill="#424142"/><rect x="3" y="3" width="1" height="1" fill="#424142"/><rect x="4" y="4" width="1" height="1" fill="#424142"/><rect x="2" y="4" width="1" height="1" fill="#424142"/><rect x="5" y="5" width="1" height="1" fill="#424142"/><rect x="1" y="5" width="1" height="1" fill="#424142"/><rect x="6" y="6" width="1" height="1" fill="#424142"/><rect x="0" y="6" width="1" height="1" fill="#424142"/></svg><div style="left:210px;top:96px;width:621px;height:460px;background:#D6D2CE"></div><div style="left:212px;top:98px;width:616px;height:1px;background:#FFFFFF"></div><div style="left:212px;top:98px;width:1px;height:436px;background:#FFFFFF"></div><div style="left:828px;top:99px;width:1px;height:435px;background:#424142"></div><div style="left:213px;top:533px;width:616px;height:1px;background:#424142"></div><div style="left:216px;top:102px;width:593px;height:414px;background:#848284"></div><div style="left:248px;top:110px;width:561px;height:24px;background:#FFFFFF"></div><svg style="position:absolute;left:248px;top:110px" width="561" height="24" viewBox="0 0 561 24" shape-rendering="crispEdges"><path transform="translate(-248,-110)" d="M248 110h1v16h-1zM267 110h1v8h-1zM286 110h1v16h-1zM305 110h1v8h-1zM324 110h1v16h-1zM342 110h1v8h-1zM361 110h1v16h-1zM380 110h1v8h-1zM399 110h1v16h-1zM418 110h1v8h-1zM437 110h1v16h-1zM456 110h1v8h-1zM475 110h1v16h-1zM494 110h1v8h-1zM513 110h1v16h-1zM532 110h1v8h-1zM550 110h1v16h-1zM569 110h1v8h-1zM588 110h1v16h-1zM607 110h1v8h-1zM626 110h1v16h-1zM645 110h1v8h-1zM664 110h1v16h-1zM683 110h1v8h-1zM702 110h1v16h-1zM720 110h1v8h-1zM739 110h1v16h-1zM758 110h1v8h-1zM777 110h1v16h-1zM796 110h1v8h-1z" fill="#000000"/></svg><div class="t" style="left:249px;top:125px;font-size:11px;color:#000000;">0</div><div class="t" style="left:287px;top:125px;font-size:11px;color:#000000;">1</div><div class="t" style="left:325px;top:125px;font-size:11px;color:#000000;">2</div><div class="t" style="left:362px;top:125px;font-size:11px;color:#000000;">3</div><div class="t" style="left:400px;top:125px;font-size:11px;color:#000000;">4</div><div class="t" style="left:438px;top:125px;font-size:11px;color:#000000;">5</div><div class="t" style="left:476px;top:125px;font-size:11px;color:#000000;">6</div><div class="t" style="left:514px;top:125px;font-size:11px;color:#000000;">7</div><div class="t" style="left:551px;top:125px;font-size:11px;color:#000000;">8</div><div class="t" style="left:589px;top:125px;font-size:11px;color:#000000;">9</div><div class="t" style="left:627px;top:125px;font-size:11px;color:#000000;">10</div><div class="t" style="left:665px;top:125px;font-size:11px;color:#000000;">11</div><div class="t" style="left:703px;top:125px;font-size:11px;color:#000000;">12</div><div class="t" style="left:740px;top:125px;font-size:11px;color:#000000;">13</div><div class="t" style="left:778px;top:125px;font-size:11px;color:#000000;">14</div><div style="left:224px;top:142px;width:585px;height:20px;background:#D6D2CE"></div><div class="t" style="left:249px;top:149px;font-size:11px;color:#000000;font-size:10.5px">ReportHeader</div><div style="left:224px;top:162px;width:585px;height:39px;background:#FFFFFF"></div><svg style="position:absolute;left:224px;top:162px" width="585" height="39" viewBox="0 0 585 39" shape-rendering="crispEdges"><path transform="translate(-224,-162)" d="M249 163h1v1h-1zM257 163h1v1h-1zM265 163h1v1h-1zM273 163h1v1h-1zM281 163h1v1h-1zM289 163h1v1h-1zM297 163h1v1h-1zM305 163h1v1h-1zM313 163h1v1h-1zM321 163h1v1h-1zM329 163h1v1h-1zM337 163h1v1h-1zM345 163h1v1h-1zM353 163h1v1h-1zM361 163h1v1h-1zM369 163h1v1h-1zM377 163h1v1h-1zM385 163h1v1h-1zM393 163h1v1h-1zM401 163h1v1h-1zM409 163h1v1h-1zM417 163h1v1h-1zM425 163h1v1h-1zM433 163h1v1h-1zM441 163h1v1h-1zM449 163h1v1h-1zM457 163h1v1h-1zM465 163h1v1h-1zM473 163h1v1h-1zM481 163h1v1h-1zM489 163h1v1h-1zM497 163h1v1h-1zM505 163h1v1h-1zM513 163h1v1h-1zM521 163h1v1h-1zM529 163h1v1h-1zM537 163h1v1h-1zM545 163h1v1h-1zM553 163h1v1h-1zM561 163h1v1h-1zM569 163h1v1h-1zM577 163h1v1h-1zM585 163h1v1h-1zM593 163h1v1h-1zM601 163h1v1h-1zM609 163h1v1h-1zM617 163h1v1h-1zM625 163h1v1h-1zM633 163h1v1h-1zM641 163h1v1h-1zM649 163h1v1h-1zM657 163h1v1h-1zM665 163h1v1h-1zM673 163h1v1h-1zM681 163h1v1h-1zM689 163h1v1h-1zM697 163h1v1h-1zM705 163h1v1h-1zM713 163h1v1h-1zM721 163h1v1h-1zM729 163h1v1h-1zM737 163h1v1h-1zM745 163h1v1h-1zM753 163h1v1h-1zM761 163h1v1h-1zM769 163h1v1h-1zM777 163h1v1h-1zM785 163h1v1h-1zM793 163h1v1h-1zM801 163h1v1h-1zM249 171h1v1h-1zM257 171h1v1h-1zM265 171h1v1h-1zM273 171h1v1h-1zM281 171h1v1h-1zM289 171h1v1h-1zM297 171h1v1h-1zM305 171h1v1h-1zM313 171h1v1h-1zM321 171h1v1h-1zM329 171h1v1h-1zM337 171h1v1h-1zM345 171h1v1h-1zM353 171h1v1h-1zM361 171h1v1h-1zM369 171h1v1h-1zM377 171h1v1h-1zM385 171h1v1h-1zM393 171h1v1h-1zM401 171h1v1h-1zM409 171h1v1h-1zM417 171h1v1h-1zM425 171h1v1h-1zM433 171h1v1h-1zM441 171h1v1h-1zM449 171h1v1h-1zM457 171h1v1h-1zM465 171h1v1h-1zM473 171h1v1h-1zM481 171h1v1h-1zM489 171h1v1h-1zM497 171h1v1h-1zM505 171h1v1h-1zM513 171h1v1h-1zM521 171h1v1h-1zM529 171h1v1h-1zM537 171h1v1h-1zM545 171h1v1h-1zM553 171h1v1h-1zM561 171h1v1h-1zM569 171h1v1h-1zM577 171h1v1h-1zM585 171h1v1h-1zM593 171h1v1h-1zM601 171h1v1h-1zM609 171h1v1h-1zM617 171h1v1h-1zM625 171h1v1h-1zM633 171h1v1h-1zM641 171h1v1h-1zM649 171h1v1h-1zM657 171h1v1h-1zM665 171h1v1h-1zM673 171h1v1h-1zM681 171h1v1h-1zM689 171h1v1h-1zM697 171h1v1h-1zM705 171h1v1h-1zM713 171h1v1h-1zM721 171h1v1h-1zM729 171h1v1h-1zM737 171h1v1h-1zM745 171h1v1h-1zM753 171h1v1h-1zM761 171h1v1h-1zM769 171h1v1h-1zM777 171h1v1h-1zM785 171h1v1h-1zM793 171h1v1h-1zM801 171h1v1h-1zM249 179h1v1h-1zM257 179h1v1h-1zM265 179h1v1h-1zM273 179h1v1h-1zM281 179h1v1h-1zM289 179h1v1h-1zM297 179h1v1h-1zM305 179h1v1h-1zM313 179h1v1h-1zM321 179h1v1h-1zM329 179h1v1h-1zM337 179h1v1h-1zM345 179h1v1h-1zM353 179h1v1h-1zM361 179h1v1h-1zM369 179h1v1h-1zM377 179h1v1h-1zM385 179h1v1h-1zM393 179h1v1h-1zM401 179h1v1h-1zM409 179h1v1h-1zM417 179h1v1h-1zM425 179h1v1h-1zM433 179h1v1h-1zM441 179h1v1h-1zM449 179h1v1h-1zM457 179h1v1h-1zM465 179h1v1h-1zM473 179h1v1h-1zM481 179h1v1h-1zM489 179h1v1h-1zM497 179h1v1h-1zM505 179h1v1h-1zM513 179h1v1h-1zM521 179h1v1h-1zM529 179h1v1h-1zM537 179h1v1h-1zM545 179h1v1h-1zM553 179h1v1h-1zM561 179h1v1h-1zM569 179h1v1h-1zM577 179h1v1h-1zM585 179h1v1h-1zM593 179h1v1h-1zM601 179h1v1h-1zM609 179h1v1h-1zM617 179h1v1h-1zM625 179h1v1h-1zM633 179h1v1h-1zM641 179h1v1h-1zM649 179h1v1h-1zM657 179h1v1h-1zM665 179h1v1h-1zM673 179h1v1h-1zM681 179h1v1h-1zM689 179h1v1h-1zM697 179h1v1h-1zM705 179h1v1h-1zM713 179h1v1h-1zM721 179h1v1h-1zM729 179h1v1h-1zM737 179h1v1h-1zM745 179h1v1h-1zM753 179h1v1h-1zM761 179h1v1h-1zM769 179h1v1h-1zM777 179h1v1h-1zM785 179h1v1h-1zM793 179h1v1h-1zM801 179h1v1h-1zM249 187h1v1h-1zM257 187h1v1h-1zM265 187h1v1h-1zM273 187h1v1h-1zM281 187h1v1h-1zM289 187h1v1h-1zM297 187h1v1h-1zM305 187h1v1h-1zM313 187h1v1h-1zM321 187h1v1h-1zM329 187h1v1h-1zM337 187h1v1h-1zM345 187h1v1h-1zM353 187h1v1h-1zM361 187h1v1h-1zM369 187h1v1h-1zM377 187h1v1h-1zM385 187h1v1h-1zM393 187h1v1h-1zM401 187h1v1h-1zM409 187h1v1h-1zM417 187h1v1h-1zM425 187h1v1h-1zM433 187h1v1h-1zM441 187h1v1h-1zM449 187h1v1h-1zM457 187h1v1h-1zM465 187h1v1h-1zM473 187h1v1h-1zM481 187h1v1h-1zM489 187h1v1h-1zM497 187h1v1h-1zM505 187h1v1h-1zM513 187h1v1h-1zM521 187h1v1h-1zM529 187h1v1h-1zM537 187h1v1h-1zM545 187h1v1h-1zM553 187h1v1h-1zM561 187h1v1h-1zM569 187h1v1h-1zM577 187h1v1h-1zM585 187h1v1h-1zM593 187h1v1h-1zM601 187h1v1h-1zM609 187h1v1h-1zM617 187h1v1h-1zM625 187h1v1h-1zM633 187h1v1h-1zM641 187h1v1h-1zM649 187h1v1h-1zM657 187h1v1h-1zM665 187h1v1h-1zM673 187h1v1h-1zM681 187h1v1h-1zM689 187h1v1h-1zM697 187h1v1h-1zM705 187h1v1h-1zM713 187h1v1h-1zM721 187h1v1h-1zM729 187h1v1h-1zM737 187h1v1h-1zM745 187h1v1h-1zM753 187h1v1h-1zM761 187h1v1h-1zM769 187h1v1h-1zM777 187h1v1h-1zM785 187h1v1h-1zM793 187h1v1h-1zM801 187h1v1h-1zM249 195h1v1h-1zM257 195h1v1h-1zM265 195h1v1h-1zM273 195h1v1h-1zM281 195h1v1h-1zM289 195h1v1h-1zM297 195h1v1h-1zM305 195h1v1h-1zM313 195h1v1h-1zM321 195h1v1h-1zM329 195h1v1h-1zM337 195h1v1h-1zM345 195h1v1h-1zM353 195h1v1h-1zM361 195h1v1h-1zM369 195h1v1h-1zM377 195h1v1h-1zM385 195h1v1h-1zM393 195h1v1h-1zM401 195h1v1h-1zM409 195h1v1h-1zM417 195h1v1h-1zM425 195h1v1h-1zM433 195h1v1h-1zM441 195h1v1h-1zM449 195h1v1h-1zM457 195h1v1h-1zM465 195h1v1h-1zM473 195h1v1h-1zM481 195h1v1h-1zM489 195h1v1h-1zM497 195h1v1h-1zM505 195h1v1h-1zM513 195h1v1h-1zM521 195h1v1h-1zM529 195h1v1h-1zM537 195h1v1h-1zM545 195h1v1h-1zM553 195h1v1h-1zM561 195h1v1h-1zM569 195h1v1h-1zM577 195h1v1h-1zM585 195h1v1h-1zM593 195h1v1h-1zM601 195h1v1h-1zM609 195h1v1h-1zM617 195h1v1h-1zM625 195h1v1h-1zM633 195h1v1h-1zM641 195h1v1h-1zM649 195h1v1h-1zM657 195h1v1h-1zM665 195h1v1h-1zM673 195h1v1h-1zM681 195h1v1h-1zM689 195h1v1h-1zM697 195h1v1h-1zM705 195h1v1h-1zM713 195h1v1h-1zM721 195h1v1h-1zM729 195h1v1h-1zM737 195h1v1h-1zM745 195h1v1h-1zM753 195h1v1h-1zM761 195h1v1h-1zM769 195h1v1h-1zM777 195h1v1h-1zM785 195h1v1h-1zM793 195h1v1h-1zM801 195h1v1h-1zM248 162h561v1h-561zM248 162h1v39h-1zM248 200h561v1h-561zM224 162h16v1h-16zM224 181h8v1h-8zM224 200h16v1h-16z" fill="#000000"/></svg><div class="t" style="left:236px;top:170px;font-size:11px;color:#000000;">0</div><div style="left:224px;top:201px;width:585px;height:4px;background:#424142"></div><div style="left:224px;top:205px;width:585px;height:20px;background:#D6D2CE"></div><div class="t" style="left:249px;top:212px;font-size:11px;color:#000000;font-size:10.5px">PageHeader</div><div style="left:224px;top:225px;width:585px;height:79px;background:#FFFFFF"></div><svg style="position:absolute;left:224px;top:225px" width="585" height="79" viewBox="0 0 585 79" shape-rendering="crispEdges"><path transform="translate(-224,-225)" d="M441 226h1v1h-1zM449 226h1v1h-1zM457 226h1v1h-1zM465 226h1v1h-1zM473 226h1v1h-1zM481 226h1v1h-1zM489 226h1v1h-1zM497 226h1v1h-1zM505 226h1v1h-1zM513 226h1v1h-1zM521 226h1v1h-1zM529 226h1v1h-1zM537 226h1v1h-1zM545 226h1v1h-1zM553 226h1v1h-1zM561 226h1v1h-1zM569 226h1v1h-1zM577 226h1v1h-1zM585 226h1v1h-1zM593 226h1v1h-1zM601 226h1v1h-1zM609 226h1v1h-1zM617 226h1v1h-1zM625 226h1v1h-1zM633 226h1v1h-1zM641 226h1v1h-1zM649 226h1v1h-1zM657 226h1v1h-1zM665 226h1v1h-1zM673 226h1v1h-1zM681 226h1v1h-1zM689 226h1v1h-1zM697 226h1v1h-1zM705 226h1v1h-1zM713 226h1v1h-1zM721 226h1v1h-1zM729 226h1v1h-1zM737 226h1v1h-1zM745 226h1v1h-1zM753 226h1v1h-1zM761 226h1v1h-1zM769 226h1v1h-1zM777 226h1v1h-1zM785 226h1v1h-1zM793 226h1v1h-1zM801 226h1v1h-1zM441 234h1v1h-1zM449 234h1v1h-1zM457 234h1v1h-1zM465 234h1v1h-1zM473 234h1v1h-1zM481 234h1v1h-1zM489 234h1v1h-1zM497 234h1v1h-1zM505 234h1v1h-1zM513 234h1v1h-1zM521 234h1v1h-1zM529 234h1v1h-1zM537 234h1v1h-1zM545 234h1v1h-1zM553 234h1v1h-1zM561 234h1v1h-1zM569 234h1v1h-1zM577 234h1v1h-1zM585 234h1v1h-1zM593 234h1v1h-1zM601 234h1v1h-1zM609 234h1v1h-1zM617 234h1v1h-1zM625 234h1v1h-1zM633 234h1v1h-1zM641 234h1v1h-1zM649 234h1v1h-1zM657 234h1v1h-1zM665 234h1v1h-1zM673 234h1v1h-1zM681 234h1v1h-1zM689 234h1v1h-1zM697 234h1v1h-1zM705 234h1v1h-1zM713 234h1v1h-1zM721 234h1v1h-1zM729 234h1v1h-1zM737 234h1v1h-1zM745 234h1v1h-1zM753 234h1v1h-1zM761 234h1v1h-1zM769 234h1v1h-1zM777 234h1v1h-1zM785 234h1v1h-1zM793 234h1v1h-1zM801 234h1v1h-1zM441 242h1v1h-1zM449 242h1v1h-1zM457 242h1v1h-1zM465 242h1v1h-1zM473 242h1v1h-1zM481 242h1v1h-1zM489 242h1v1h-1zM497 242h1v1h-1zM505 242h1v1h-1zM513 242h1v1h-1zM521 242h1v1h-1zM529 242h1v1h-1zM537 242h1v1h-1zM545 242h1v1h-1zM553 242h1v1h-1zM561 242h1v1h-1zM569 242h1v1h-1zM577 242h1v1h-1zM585 242h1v1h-1zM593 242h1v1h-1zM601 242h1v1h-1zM609 242h1v1h-1zM617 242h1v1h-1zM625 242h1v1h-1zM633 242h1v1h-1zM641 242h1v1h-1zM649 242h1v1h-1zM657 242h1v1h-1zM665 242h1v1h-1zM673 242h1v1h-1zM681 242h1v1h-1zM689 242h1v1h-1zM697 242h1v1h-1zM705 242h1v1h-1zM713 242h1v1h-1zM721 242h1v1h-1zM729 242h1v1h-1zM737 242h1v1h-1zM745 242h1v1h-1zM753 242h1v1h-1zM761 242h1v1h-1zM769 242h1v1h-1zM777 242h1v1h-1zM785 242h1v1h-1zM793 242h1v1h-1zM801 242h1v1h-1zM441 250h1v1h-1zM449 250h1v1h-1zM457 250h1v1h-1zM465 250h1v1h-1zM473 250h1v1h-1zM481 250h1v1h-1zM489 250h1v1h-1zM497 250h1v1h-1zM505 250h1v1h-1zM513 250h1v1h-1zM521 250h1v1h-1zM529 250h1v1h-1zM537 250h1v1h-1zM545 250h1v1h-1zM553 250h1v1h-1zM561 250h1v1h-1zM569 250h1v1h-1zM577 250h1v1h-1zM585 250h1v1h-1zM593 250h1v1h-1zM601 250h1v1h-1zM609 250h1v1h-1zM617 250h1v1h-1zM625 250h1v1h-1zM633 250h1v1h-1zM641 250h1v1h-1zM649 250h1v1h-1zM657 250h1v1h-1zM665 250h1v1h-1zM673 250h1v1h-1zM681 250h1v1h-1zM689 250h1v1h-1zM697 250h1v1h-1zM705 250h1v1h-1zM713 250h1v1h-1zM721 250h1v1h-1zM729 250h1v1h-1zM737 250h1v1h-1zM745 250h1v1h-1zM753 250h1v1h-1zM761 250h1v1h-1zM769 250h1v1h-1zM777 250h1v1h-1zM785 250h1v1h-1zM793 250h1v1h-1zM801 250h1v1h-1zM441 258h1v1h-1zM449 258h1v1h-1zM457 258h1v1h-1zM465 258h1v1h-1zM473 258h1v1h-1zM481 258h1v1h-1zM489 258h1v1h-1zM497 258h1v1h-1zM505 258h1v1h-1zM513 258h1v1h-1zM521 258h1v1h-1zM529 258h1v1h-1zM537 258h1v1h-1zM545 258h1v1h-1zM553 258h1v1h-1zM561 258h1v1h-1zM569 258h1v1h-1zM577 258h1v1h-1zM585 258h1v1h-1zM593 258h1v1h-1zM601 258h1v1h-1zM609 258h1v1h-1zM617 258h1v1h-1zM625 258h1v1h-1zM633 258h1v1h-1zM641 258h1v1h-1zM649 258h1v1h-1zM657 258h1v1h-1zM665 258h1v1h-1zM673 258h1v1h-1zM681 258h1v1h-1zM689 258h1v1h-1zM697 258h1v1h-1zM705 258h1v1h-1zM713 258h1v1h-1zM721 258h1v1h-1zM729 258h1v1h-1zM737 258h1v1h-1zM745 258h1v1h-1zM753 258h1v1h-1zM761 258h1v1h-1zM769 258h1v1h-1zM777 258h1v1h-1zM785 258h1v1h-1zM793 258h1v1h-1zM801 258h1v1h-1zM249 298h1v1h-1zM257 298h1v1h-1zM265 298h1v1h-1zM273 298h1v1h-1zM281 298h1v1h-1zM289 298h1v1h-1zM297 298h1v1h-1zM305 298h1v1h-1zM313 298h1v1h-1zM321 298h1v1h-1zM329 298h1v1h-1zM337 298h1v1h-1zM345 298h1v1h-1zM353 298h1v1h-1zM361 298h1v1h-1zM369 298h1v1h-1zM377 298h1v1h-1zM385 298h1v1h-1zM393 298h1v1h-1zM401 298h1v1h-1zM409 298h1v1h-1zM417 298h1v1h-1zM425 298h1v1h-1zM433 298h1v1h-1zM441 298h1v1h-1zM449 298h1v1h-1zM457 298h1v1h-1zM465 298h1v1h-1zM473 298h1v1h-1zM481 298h1v1h-1zM489 298h1v1h-1zM497 298h1v1h-1zM505 298h1v1h-1zM513 298h1v1h-1zM521 298h1v1h-1zM529 298h1v1h-1zM537 298h1v1h-1zM545 298h1v1h-1zM553 298h1v1h-1zM561 298h1v1h-1zM569 298h1v1h-1zM577 298h1v1h-1zM585 298h1v1h-1zM593 298h1v1h-1zM601 298h1v1h-1zM609 298h1v1h-1zM617 298h1v1h-1zM625 298h1v1h-1zM633 298h1v1h-1zM641 298h1v1h-1zM649 298h1v1h-1zM657 298h1v1h-1zM665 298h1v1h-1zM673 298h1v1h-1zM681 298h1v1h-1zM689 298h1v1h-1zM697 298h1v1h-1zM705 298h1v1h-1zM713 298h1v1h-1zM721 298h1v1h-1zM729 298h1v1h-1zM737 298h1v1h-1zM745 298h1v1h-1zM753 298h1v1h-1zM761 298h1v1h-1zM769 298h1v1h-1zM777 298h1v1h-1zM785 298h1v1h-1zM793 298h1v1h-1zM801 298h1v1h-1zM248 225h561v1h-561zM248 225h1v79h-1zM248 303h561v1h-561zM224 225h16v1h-16zM224 244h8v1h-8zM224 263h16v1h-16zM224 282h8v1h-8zM224 301h16v1h-16z" fill="#000000"/></svg><div class="t" style="left:236px;top:233px;font-size:11px;color:#000000;">0</div><div class="t" style="left:236px;top:270px;font-size:11px;color:#000000;">1</div><div style="left:224px;top:304px;width:585px;height:4px;background:#424142"></div><div class="t" style="left:249px;top:239px;font-size:21px;color:#000000;letter-spacing:0">Test 1</div><div class="t" style="left:249px;top:279px;font-size:21px;color:#000000;letter-spacing:0">CategoryID</div><div class="t" style="left:436px;top:279px;font-size:21px;color:#000000;letter-spacing:0">CategoryName</div><div class="t" style="left:623px;top:279px;font-size:21px;color:#000000;letter-spacing:0">Description</div><div style="left:224px;top:308px;width:585px;height:20px;background:#D6D2CE"></div><div class="t" style="left:249px;top:315px;font-size:11px;color:#000000;font-size:10.5px">DetailSection</div><div style="left:224px;top:328px;width:585px;height:39px;background:#FFFFFF"></div><svg style="position:absolute;left:224px;top:328px" width="585" height="39" viewBox="0 0 585 39" shape-rendering="crispEdges"><path transform="translate(-224,-328)" d="M249 329h1v1h-1zM257 329h1v1h-1zM265 329h1v1h-1zM273 329h1v1h-1zM281 329h1v1h-1zM289 329h1v1h-1zM297 329h1v1h-1zM305 329h1v1h-1zM313 329h1v1h-1zM321 329h1v1h-1zM329 329h1v1h-1zM337 329h1v1h-1zM345 329h1v1h-1zM353 329h1v1h-1zM361 329h1v1h-1zM369 329h1v1h-1zM377 329h1v1h-1zM385 329h1v1h-1zM393 329h1v1h-1zM401 329h1v1h-1zM409 329h1v1h-1zM417 329h1v1h-1zM425 329h1v1h-1zM433 329h1v1h-1zM441 329h1v1h-1zM449 329h1v1h-1zM457 329h1v1h-1zM465 329h1v1h-1zM473 329h1v1h-1zM481 329h1v1h-1zM489 329h1v1h-1zM497 329h1v1h-1zM505 329h1v1h-1zM513 329h1v1h-1zM521 329h1v1h-1zM529 329h1v1h-1zM537 329h1v1h-1zM545 329h1v1h-1zM553 329h1v1h-1zM561 329h1v1h-1zM569 329h1v1h-1zM577 329h1v1h-1zM585 329h1v1h-1zM593 329h1v1h-1zM601 329h1v1h-1zM609 329h1v1h-1zM617 329h1v1h-1zM625 329h1v1h-1zM633 329h1v1h-1zM641 329h1v1h-1zM649 329h1v1h-1zM657 329h1v1h-1zM665 329h1v1h-1zM673 329h1v1h-1zM681 329h1v1h-1zM689 329h1v1h-1zM697 329h1v1h-1zM705 329h1v1h-1zM713 329h1v1h-1zM721 329h1v1h-1zM729 329h1v1h-1zM737 329h1v1h-1zM745 329h1v1h-1zM753 329h1v1h-1zM761 329h1v1h-1zM769 329h1v1h-1zM777 329h1v1h-1zM785 329h1v1h-1zM793 329h1v1h-1zM801 329h1v1h-1zM249 361h1v1h-1zM257 361h1v1h-1zM265 361h1v1h-1zM273 361h1v1h-1zM281 361h1v1h-1zM289 361h1v1h-1zM297 361h1v1h-1zM305 361h1v1h-1zM313 361h1v1h-1zM321 361h1v1h-1zM329 361h1v1h-1zM337 361h1v1h-1zM345 361h1v1h-1zM353 361h1v1h-1zM361 361h1v1h-1zM369 361h1v1h-1zM377 361h1v1h-1zM385 361h1v1h-1zM393 361h1v1h-1zM401 361h1v1h-1zM409 361h1v1h-1zM417 361h1v1h-1zM425 361h1v1h-1zM433 361h1v1h-1zM441 361h1v1h-1zM449 361h1v1h-1zM457 361h1v1h-1zM465 361h1v1h-1zM473 361h1v1h-1zM481 361h1v1h-1zM489 361h1v1h-1zM497 361h1v1h-1zM505 361h1v1h-1zM513 361h1v1h-1zM521 361h1v1h-1zM529 361h1v1h-1zM537 361h1v1h-1zM545 361h1v1h-1zM553 361h1v1h-1zM561 361h1v1h-1zM569 361h1v1h-1zM577 361h1v1h-1zM585 361h1v1h-1zM593 361h1v1h-1zM601 361h1v1h-1zM609 361h1v1h-1zM617 361h1v1h-1zM625 361h1v1h-1zM633 361h1v1h-1zM641 361h1v1h-1zM649 361h1v1h-1zM657 361h1v1h-1zM665 361h1v1h-1zM673 361h1v1h-1zM681 361h1v1h-1zM689 361h1v1h-1zM697 361h1v1h-1zM705 361h1v1h-1zM713 361h1v1h-1zM721 361h1v1h-1zM729 361h1v1h-1zM737 361h1v1h-1zM745 361h1v1h-1zM753 361h1v1h-1zM761 361h1v1h-1zM769 361h1v1h-1zM777 361h1v1h-1zM785 361h1v1h-1zM793 361h1v1h-1zM801 361h1v1h-1zM248 328h561v1h-561zM248 328h1v39h-1zM248 366h561v1h-561zM224 328h16v1h-16zM224 347h8v1h-8zM224 366h16v1h-16z" fill="#000000"/></svg><div class="t" style="left:236px;top:336px;font-size:11px;color:#000000;">0</div><div style="left:224px;top:367px;width:585px;height:4px;background:#424142"></div><div class="t" style="left:249px;top:346px;font-size:21px;color:#000000;letter-spacing:0">CategoryID</div><div class="t" style="left:436px;top:346px;font-size:21px;color:#000000;letter-spacing:0">CategoryName</div><div class="t" style="left:623px;top:346px;font-size:21px;color:#000000;letter-spacing:0">Description</div><div style="left:224px;top:371px;width:585px;height:20px;background:#D6D2CE"></div><div class="t" style="left:249px;top:378px;font-size:11px;color:#000000;font-size:10.5px">PageFooter</div><div style="left:224px;top:391px;width:585px;height:39px;background:#FFFFFF"></div><svg style="position:absolute;left:224px;top:391px" width="585" height="39" viewBox="0 0 585 39" shape-rendering="crispEdges"><path transform="translate(-224,-391)" d="M441 392h1v1h-1zM449 392h1v1h-1zM457 392h1v1h-1zM465 392h1v1h-1zM473 392h1v1h-1zM481 392h1v1h-1zM489 392h1v1h-1zM497 392h1v1h-1zM505 392h1v1h-1zM513 392h1v1h-1zM521 392h1v1h-1zM529 392h1v1h-1zM537 392h1v1h-1zM545 392h1v1h-1zM553 392h1v1h-1zM561 392h1v1h-1zM569 392h1v1h-1zM577 392h1v1h-1zM585 392h1v1h-1zM593 392h1v1h-1zM601 392h1v1h-1zM609 392h1v1h-1zM617 392h1v1h-1zM625 392h1v1h-1zM633 392h1v1h-1zM641 392h1v1h-1zM649 392h1v1h-1zM657 392h1v1h-1zM665 392h1v1h-1zM673 392h1v1h-1zM681 392h1v1h-1zM689 392h1v1h-1zM697 392h1v1h-1zM705 392h1v1h-1zM713 392h1v1h-1zM721 392h1v1h-1zM729 392h1v1h-1zM737 392h1v1h-1zM745 392h1v1h-1zM753 392h1v1h-1zM761 392h1v1h-1zM769 392h1v1h-1zM777 392h1v1h-1zM785 392h1v1h-1zM793 392h1v1h-1zM801 392h1v1h-1zM441 400h1v1h-1zM449 400h1v1h-1zM457 400h1v1h-1zM465 400h1v1h-1zM473 400h1v1h-1zM481 400h1v1h-1zM489 400h1v1h-1zM497 400h1v1h-1zM505 400h1v1h-1zM513 400h1v1h-1zM521 400h1v1h-1zM529 400h1v1h-1zM537 400h1v1h-1zM545 400h1v1h-1zM553 400h1v1h-1zM561 400h1v1h-1zM569 400h1v1h-1zM577 400h1v1h-1zM585 400h1v1h-1zM593 400h1v1h-1zM601 400h1v1h-1zM609 400h1v1h-1zM617 400h1v1h-1zM625 400h1v1h-1zM633 400h1v1h-1zM641 400h1v1h-1zM649 400h1v1h-1zM657 400h1v1h-1zM665 400h1v1h-1zM673 400h1v1h-1zM681 400h1v1h-1zM689 400h1v1h-1zM697 400h1v1h-1zM705 400h1v1h-1zM713 400h1v1h-1zM721 400h1v1h-1zM729 400h1v1h-1zM737 400h1v1h-1zM745 400h1v1h-1zM753 400h1v1h-1zM761 400h1v1h-1zM769 400h1v1h-1zM777 400h1v1h-1zM785 400h1v1h-1zM793 400h1v1h-1zM801 400h1v1h-1zM441 408h1v1h-1zM449 408h1v1h-1zM457 408h1v1h-1zM465 408h1v1h-1zM473 408h1v1h-1zM481 408h1v1h-1zM489 408h1v1h-1zM497 408h1v1h-1zM505 408h1v1h-1zM513 408h1v1h-1zM521 408h1v1h-1zM529 408h1v1h-1zM537 408h1v1h-1zM545 408h1v1h-1zM553 408h1v1h-1zM561 408h1v1h-1zM569 408h1v1h-1zM577 408h1v1h-1zM585 408h1v1h-1zM593 408h1v1h-1zM601 408h1v1h-1zM609 408h1v1h-1zM617 408h1v1h-1zM625 408h1v1h-1zM633 408h1v1h-1zM641 408h1v1h-1zM649 408h1v1h-1zM657 408h1v1h-1zM665 408h1v1h-1zM673 408h1v1h-1zM681 408h1v1h-1zM689 408h1v1h-1zM697 408h1v1h-1zM705 408h1v1h-1zM713 408h1v1h-1zM721 408h1v1h-1zM729 408h1v1h-1zM737 408h1v1h-1zM745 408h1v1h-1zM753 408h1v1h-1zM761 408h1v1h-1zM769 408h1v1h-1zM777 408h1v1h-1zM785 408h1v1h-1zM793 408h1v1h-1zM801 408h1v1h-1zM441 416h1v1h-1zM449 416h1v1h-1zM457 416h1v1h-1zM465 416h1v1h-1zM473 416h1v1h-1zM481 416h1v1h-1zM489 416h1v1h-1zM497 416h1v1h-1zM505 416h1v1h-1zM513 416h1v1h-1zM521 416h1v1h-1zM529 416h1v1h-1zM537 416h1v1h-1zM545 416h1v1h-1zM553 416h1v1h-1zM561 416h1v1h-1zM569 416h1v1h-1zM577 416h1v1h-1zM585 416h1v1h-1zM593 416h1v1h-1zM601 416h1v1h-1zM609 416h1v1h-1zM617 416h1v1h-1zM625 416h1v1h-1zM633 416h1v1h-1zM641 416h1v1h-1zM649 416h1v1h-1zM657 416h1v1h-1zM665 416h1v1h-1zM673 416h1v1h-1zM681 416h1v1h-1zM689 416h1v1h-1zM697 416h1v1h-1zM705 416h1v1h-1zM713 416h1v1h-1zM721 416h1v1h-1zM729 416h1v1h-1zM737 416h1v1h-1zM745 416h1v1h-1zM753 416h1v1h-1zM761 416h1v1h-1zM769 416h1v1h-1zM777 416h1v1h-1zM785 416h1v1h-1zM793 416h1v1h-1zM801 416h1v1h-1zM249 424h1v1h-1zM257 424h1v1h-1zM265 424h1v1h-1zM273 424h1v1h-1zM281 424h1v1h-1zM289 424h1v1h-1zM297 424h1v1h-1zM305 424h1v1h-1zM313 424h1v1h-1zM321 424h1v1h-1zM329 424h1v1h-1zM337 424h1v1h-1zM345 424h1v1h-1zM353 424h1v1h-1zM361 424h1v1h-1zM369 424h1v1h-1zM377 424h1v1h-1zM385 424h1v1h-1zM393 424h1v1h-1zM401 424h1v1h-1zM409 424h1v1h-1zM417 424h1v1h-1zM425 424h1v1h-1zM433 424h1v1h-1zM441 424h1v1h-1zM449 424h1v1h-1zM457 424h1v1h-1zM465 424h1v1h-1zM473 424h1v1h-1zM481 424h1v1h-1zM489 424h1v1h-1zM497 424h1v1h-1zM505 424h1v1h-1zM513 424h1v1h-1zM521 424h1v1h-1zM529 424h1v1h-1zM537 424h1v1h-1zM545 424h1v1h-1zM553 424h1v1h-1zM561 424h1v1h-1zM569 424h1v1h-1zM577 424h1v1h-1zM585 424h1v1h-1zM593 424h1v1h-1zM601 424h1v1h-1zM609 424h1v1h-1zM617 424h1v1h-1zM625 424h1v1h-1zM633 424h1v1h-1zM641 424h1v1h-1zM649 424h1v1h-1zM657 424h1v1h-1zM665 424h1v1h-1zM673 424h1v1h-1zM681 424h1v1h-1zM689 424h1v1h-1zM697 424h1v1h-1zM705 424h1v1h-1zM713 424h1v1h-1zM721 424h1v1h-1zM729 424h1v1h-1zM737 424h1v1h-1zM745 424h1v1h-1zM753 424h1v1h-1zM761 424h1v1h-1zM769 424h1v1h-1zM777 424h1v1h-1zM785 424h1v1h-1zM793 424h1v1h-1zM801 424h1v1h-1zM248 391h561v1h-561zM248 391h1v39h-1zM248 429h561v1h-561zM224 391h16v1h-16zM224 410h8v1h-8zM224 429h16v1h-16z" fill="#000000"/></svg><div class="t" style="left:236px;top:399px;font-size:11px;color:#000000;">0</div><div style="left:224px;top:430px;width:585px;height:4px;background:#424142"></div><div class="t" style="left:249px;top:405px;font-size:21px;color:#000000;letter-spacing:0">PageNumber</div><div style="left:224px;top:434px;width:585px;height:20px;background:#D6D2CE"></div><div class="t" style="left:249px;top:441px;font-size:11px;color:#000000;font-size:10.5px">ReportFooter</div><div style="left:224px;top:454px;width:585px;height:39px;background:#FFFFFF"></div><svg style="position:absolute;left:224px;top:454px" width="585" height="39" viewBox="0 0 585 39" shape-rendering="crispEdges"><path transform="translate(-224,-454)" d="M249 455h1v1h-1zM257 455h1v1h-1zM265 455h1v1h-1zM273 455h1v1h-1zM281 455h1v1h-1zM289 455h1v1h-1zM297 455h1v1h-1zM305 455h1v1h-1zM313 455h1v1h-1zM321 455h1v1h-1zM329 455h1v1h-1zM337 455h1v1h-1zM345 455h1v1h-1zM353 455h1v1h-1zM361 455h1v1h-1zM369 455h1v1h-1zM377 455h1v1h-1zM385 455h1v1h-1zM393 455h1v1h-1zM401 455h1v1h-1zM409 455h1v1h-1zM417 455h1v1h-1zM425 455h1v1h-1zM433 455h1v1h-1zM441 455h1v1h-1zM449 455h1v1h-1zM457 455h1v1h-1zM465 455h1v1h-1zM473 455h1v1h-1zM481 455h1v1h-1zM489 455h1v1h-1zM497 455h1v1h-1zM505 455h1v1h-1zM513 455h1v1h-1zM521 455h1v1h-1zM529 455h1v1h-1zM537 455h1v1h-1zM545 455h1v1h-1zM553 455h1v1h-1zM561 455h1v1h-1zM569 455h1v1h-1zM577 455h1v1h-1zM585 455h1v1h-1zM593 455h1v1h-1zM601 455h1v1h-1zM609 455h1v1h-1zM617 455h1v1h-1zM625 455h1v1h-1zM633 455h1v1h-1zM641 455h1v1h-1zM649 455h1v1h-1zM657 455h1v1h-1zM665 455h1v1h-1zM673 455h1v1h-1zM681 455h1v1h-1zM689 455h1v1h-1zM697 455h1v1h-1zM705 455h1v1h-1zM713 455h1v1h-1zM721 455h1v1h-1zM729 455h1v1h-1zM737 455h1v1h-1zM745 455h1v1h-1zM753 455h1v1h-1zM761 455h1v1h-1zM769 455h1v1h-1zM777 455h1v1h-1zM785 455h1v1h-1zM793 455h1v1h-1zM801 455h1v1h-1zM249 463h1v1h-1zM257 463h1v1h-1zM265 463h1v1h-1zM273 463h1v1h-1zM281 463h1v1h-1zM289 463h1v1h-1zM297 463h1v1h-1zM305 463h1v1h-1zM313 463h1v1h-1zM321 463h1v1h-1zM329 463h1v1h-1zM337 463h1v1h-1zM345 463h1v1h-1zM353 463h1v1h-1zM361 463h1v1h-1zM369 463h1v1h-1zM377 463h1v1h-1zM385 463h1v1h-1zM393 463h1v1h-1zM401 463h1v1h-1zM409 463h1v1h-1zM417 463h1v1h-1zM425 463h1v1h-1zM433 463h1v1h-1zM441 463h1v1h-1zM449 463h1v1h-1zM457 463h1v1h-1zM465 463h1v1h-1zM473 463h1v1h-1zM481 463h1v1h-1zM489 463h1v1h-1zM497 463h1v1h-1zM505 463h1v1h-1zM513 463h1v1h-1zM521 463h1v1h-1zM529 463h1v1h-1zM537 463h1v1h-1zM545 463h1v1h-1zM553 463h1v1h-1zM561 463h1v1h-1zM569 463h1v1h-1zM577 463h1v1h-1zM585 463h1v1h-1zM593 463h1v1h-1zM601 463h1v1h-1zM609 463h1v1h-1zM617 463h1v1h-1zM625 463h1v1h-1zM633 463h1v1h-1zM641 463h1v1h-1zM649 463h1v1h-1zM657 463h1v1h-1zM665 463h1v1h-1zM673 463h1v1h-1zM681 463h1v1h-1zM689 463h1v1h-1zM697 463h1v1h-1zM705 463h1v1h-1zM713 463h1v1h-1zM721 463h1v1h-1zM729 463h1v1h-1zM737 463h1v1h-1zM745 463h1v1h-1zM753 463h1v1h-1zM761 463h1v1h-1zM769 463h1v1h-1zM777 463h1v1h-1zM785 463h1v1h-1zM793 463h1v1h-1zM801 463h1v1h-1zM249 471h1v1h-1zM257 471h1v1h-1zM265 471h1v1h-1zM273 471h1v1h-1zM281 471h1v1h-1zM289 471h1v1h-1zM297 471h1v1h-1zM305 471h1v1h-1zM313 471h1v1h-1zM321 471h1v1h-1zM329 471h1v1h-1zM337 471h1v1h-1zM345 471h1v1h-1zM353 471h1v1h-1zM361 471h1v1h-1zM369 471h1v1h-1zM377 471h1v1h-1zM385 471h1v1h-1zM393 471h1v1h-1zM401 471h1v1h-1zM409 471h1v1h-1zM417 471h1v1h-1zM425 471h1v1h-1zM433 471h1v1h-1zM441 471h1v1h-1zM449 471h1v1h-1zM457 471h1v1h-1zM465 471h1v1h-1zM473 471h1v1h-1zM481 471h1v1h-1zM489 471h1v1h-1zM497 471h1v1h-1zM505 471h1v1h-1zM513 471h1v1h-1zM521 471h1v1h-1zM529 471h1v1h-1zM537 471h1v1h-1zM545 471h1v1h-1zM553 471h1v1h-1zM561 471h1v1h-1zM569 471h1v1h-1zM577 471h1v1h-1zM585 471h1v1h-1zM593 471h1v1h-1zM601 471h1v1h-1zM609 471h1v1h-1zM617 471h1v1h-1zM625 471h1v1h-1zM633 471h1v1h-1zM641 471h1v1h-1zM649 471h1v1h-1zM657 471h1v1h-1zM665 471h1v1h-1zM673 471h1v1h-1zM681 471h1v1h-1zM689 471h1v1h-1zM697 471h1v1h-1zM705 471h1v1h-1zM713 471h1v1h-1zM721 471h1v1h-1zM729 471h1v1h-1zM737 471h1v1h-1zM745 471h1v1h-1zM753 471h1v1h-1zM761 471h1v1h-1zM769 471h1v1h-1zM777 471h1v1h-1zM785 471h1v1h-1zM793 471h1v1h-1zM801 471h1v1h-1zM249 479h1v1h-1zM257 479h1v1h-1zM265 479h1v1h-1zM273 479h1v1h-1zM281 479h1v1h-1zM289 479h1v1h-1zM297 479h1v1h-1zM305 479h1v1h-1zM313 479h1v1h-1zM321 479h1v1h-1zM329 479h1v1h-1zM337 479h1v1h-1zM345 479h1v1h-1zM353 479h1v1h-1zM361 479h1v1h-1zM369 479h1v1h-1zM377 479h1v1h-1zM385 479h1v1h-1zM393 479h1v1h-1zM401 479h1v1h-1zM409 479h1v1h-1zM417 479h1v1h-1zM425 479h1v1h-1zM433 479h1v1h-1zM441 479h1v1h-1zM449 479h1v1h-1zM457 479h1v1h-1zM465 479h1v1h-1zM473 479h1v1h-1zM481 479h1v1h-1zM489 479h1v1h-1zM497 479h1v1h-1zM505 479h1v1h-1zM513 479h1v1h-1zM521 479h1v1h-1zM529 479h1v1h-1zM537 479h1v1h-1zM545 479h1v1h-1zM553 479h1v1h-1zM561 479h1v1h-1zM569 479h1v1h-1zM577 479h1v1h-1zM585 479h1v1h-1zM593 479h1v1h-1zM601 479h1v1h-1zM609 479h1v1h-1zM617 479h1v1h-1zM625 479h1v1h-1zM633 479h1v1h-1zM641 479h1v1h-1zM649 479h1v1h-1zM657 479h1v1h-1zM665 479h1v1h-1zM673 479h1v1h-1zM681 479h1v1h-1zM689 479h1v1h-1zM697 479h1v1h-1zM705 479h1v1h-1zM713 479h1v1h-1zM721 479h1v1h-1zM729 479h1v1h-1zM737 479h1v1h-1zM745 479h1v1h-1zM753 479h1v1h-1zM761 479h1v1h-1zM769 479h1v1h-1zM777 479h1v1h-1zM785 479h1v1h-1zM793 479h1v1h-1zM801 479h1v1h-1zM249 487h1v1h-1zM257 487h1v1h-1zM265 487h1v1h-1zM273 487h1v1h-1zM281 487h1v1h-1zM289 487h1v1h-1zM297 487h1v1h-1zM305 487h1v1h-1zM313 487h1v1h-1zM321 487h1v1h-1zM329 487h1v1h-1zM337 487h1v1h-1zM345 487h1v1h-1zM353 487h1v1h-1zM361 487h1v1h-1zM369 487h1v1h-1zM377 487h1v1h-1zM385 487h1v1h-1zM393 487h1v1h-1zM401 487h1v1h-1zM409 487h1v1h-1zM417 487h1v1h-1zM425 487h1v1h-1zM433 487h1v1h-1zM441 487h1v1h-1zM449 487h1v1h-1zM457 487h1v1h-1zM465 487h1v1h-1zM473 487h1v1h-1zM481 487h1v1h-1zM489 487h1v1h-1zM497 487h1v1h-1zM505 487h1v1h-1zM513 487h1v1h-1zM521 487h1v1h-1zM529 487h1v1h-1zM537 487h1v1h-1zM545 487h1v1h-1zM553 487h1v1h-1zM561 487h1v1h-1zM569 487h1v1h-1zM577 487h1v1h-1zM585 487h1v1h-1zM593 487h1v1h-1zM601 487h1v1h-1zM609 487h1v1h-1zM617 487h1v1h-1zM625 487h1v1h-1zM633 487h1v1h-1zM641 487h1v1h-1zM649 487h1v1h-1zM657 487h1v1h-1zM665 487h1v1h-1zM673 487h1v1h-1zM681 487h1v1h-1zM689 487h1v1h-1zM697 487h1v1h-1zM705 487h1v1h-1zM713 487h1v1h-1zM721 487h1v1h-1zM729 487h1v1h-1zM737 487h1v1h-1zM745 487h1v1h-1zM753 487h1v1h-1zM761 487h1v1h-1zM769 487h1v1h-1zM777 487h1v1h-1zM785 487h1v1h-1zM793 487h1v1h-1zM801 487h1v1h-1zM248 454h561v1h-561zM248 454h1v39h-1zM248 492h561v1h-561zM224 454h16v1h-16zM224 473h8v1h-8zM224 492h16v1h-16z" fill="#000000"/></svg><div class="t" style="left:236px;top:462px;font-size:11px;color:#000000;">0</div><div style="left:224px;top:493px;width:585px;height:4px;background:#424142"></div><div style="left:809px;top:102px;width:16px;height:16px;background:#D6D2CE;box-shadow:inset -1px -1px #424142,inset 1px 1px #D6D2CE,inset -2px -2px #848284,inset 2px 2px #FFFFFF"></div><svg style="position:absolute;left:809px;top:102px" width="16" height="16" viewBox="0 0 16 16" shape-rendering="crispEdges"><path d="M4 9h7v1h-7zM5 8h5v1h-5zM6 7h3v1h-3zM7 6h1v1h-1z" fill="#000000"/></svg><div style="left:809px;top:118px;width:16px;height:16px;background:#D6D2CE;box-shadow:inset -1px -1px #424142,inset 1px 1px #D6D2CE,inset -2px -2px #848284,inset 2px 2px #FFFFFF"></div><div style="left:809px;top:134px;width:16px;height:366px;background-color:#FFFFFF;background-image:linear-gradient(45deg,#D6D2CE 25%,transparent 25%,transparent 75%,#D6D2CE 75%),linear-gradient(45deg,#D6D2CE 25%,transparent 25%,transparent 75%,#D6D2CE 75%);background-size:2px 2px;background-position:0 0,1px 1px"></div><div style="left:809px;top:500px;width:16px;height:16px;background:#D6D2CE;box-shadow:inset -1px -1px #424142,inset 1px 1px #D6D2CE,inset -2px -2px #848284,inset 2px 2px #FFFFFF"></div><svg style="position:absolute;left:809px;top:500px" width="16" height="16" viewBox="0 0 16 16" shape-rendering="crispEdges"><path d="M4 6h7v1h-7zM5 7h5v1h-5zM6 8h3v1h-3zM7 9h1v1h-1z" fill="#000000"/></svg><div style="left:216px;top:516px;width:16px;height:16px;background:#D6D2CE;box-shadow:inset -1px -1px #424142,inset 1px 1px #D6D2CE,inset -2px -2px #848284,inset 2px 2px #FFFFFF"></div><svg style="position:absolute;left:216px;top:516px" width="16" height="16" viewBox="0 0 16 16" shape-rendering="crispEdges"><path d="M6 4h1v7h-1zM5 5h1v5h-1zM4 6h1v3h-1zM3 7h1v1h-1z" fill="#000000" transform="translate(1,0)"/></svg><div style="left:232px;top:516px;width:16px;height:16px;background:#D6D2CE;box-shadow:inset -1px -1px #424142,inset 1px 1px #D6D2CE,inset -2px -2px #848284,inset 2px 2px #FFFFFF"></div><div style="left:248px;top:516px;width:545px;height:16px;background-color:#FFFFFF;background-image:linear-gradient(45deg,#D6D2CE 25%,transparent 25%,transparent 75%,#D6D2CE 75%),linear-gradient(45deg,#D6D2CE 25%,transparent 25%,transparent 75%,#D6D2CE 75%);background-size:2px 2px;background-position:0 0,1px 1px"></div><div style="left:793px;top:516px;width:16px;height:16px;background:#D6D2CE;box-shadow:inset -1px -1px #424142,inset 1px 1px #D6D2CE,inset -2px -2px #848284,inset 2px 2px #FFFFFF"></div><svg style="position:absolute;left:793px;top:516px" width="16" height="16" viewBox="0 0 16 16" shape-rendering="crispEdges"><path d="M6 4h1v7h-1zM7 5h1v5h-1zM8 6h1v3h-1zM9 7h1v1h-1z" fill="#000000"/></svg><div style="left:809px;top:516px;width:16px;height:16px;background:#D6D2CE"></div><div style="left:213px;top:533px;width:46px;height:21px;background:#D6D2CE;box-shadow:inset 1px 0 #FFFFFF,inset -1px -1px #424142"></div><div class="t" style="left:219px;top:545px;font-size:11px;color:#000000;">Design</div><div style="left:260px;top:533px;width:48px;height:19px;background:#D6D2CE;box-shadow:inset 1px 0 #424142,inset -1px -1px #424142,inset 2px 0 #848284,inset -2px -2px #848284"></div><div class="t" style="left:263px;top:544px;font-size:11px;color:#000000;">Preview</div><div style="left:209px;top:561px;width:623px;height:1px;background:#848284"></div><div style="left:209px;top:561px;width:1px;height:138px;background:#848284"></div><div style="left:831px;top:561px;width:1px;height:138px;background:#848284"></div><div class="t" style="left:214px;top:570px;font-size:11px;color:#000000;">Output</div><svg style="position:absolute;left:802px;top:565px" width="7" height="9" viewBox="0 0 7 9" shape-rendering="crispEdges"><rect x="2" y="0" width="4" height="1" fill="#000000"/><rect x="2" y="0" width="1" height="5" fill="#000000"/><rect x="4" y="0" width="2" height="5" fill="#000000"/><rect x="0" y="5" width="7" height="1" fill="#000000"/><rect x="3" y="6" width="1" height="3" fill="#000000"/></svg><svg style="position:absolute;left:818px;top:566px" width="7" height="7" viewBox="0 0 7 7" shape-rendering="crispEdges"><rect x="0" y="0" width="1" height="1" fill="#000000"/><rect x="6" y="0" width="1" height="1" fill="#000000"/><rect x="1" y="1" width="1" height="1" fill="#000000"/><rect x="5" y="1" width="1" height="1" fill="#000000"/><rect x="2" y="2" width="1" height="1" fill="#000000"/><rect x="4" y="2" width="1" height="1" fill="#000000"/><rect x="3" y="3" width="1" height="1" fill="#000000"/><rect x="3" y="3" width="1" height="1" fill="#000000"/><rect x="4" y="4" width="1" height="1" fill="#000000"/><rect x="2" y="4" width="1" height="1" fill="#000000"/><rect x="5" y="5" width="1" height="1" fill="#000000"/><rect x="1" y="5" width="1" height="1" fill="#000000"/><rect x="6" y="6" width="1" height="1" fill="#000000"/><rect x="0" y="6" width="1" height="1" fill="#000000"/></svg><div style="left:209px;top:577px;width:623px;height:23px;background:#FFFFFF;box-shadow:inset -1px -1px #FFFFFF,inset 1px 1px #848284,inset -2px -2px #D6D2CE,inset 2px 2px #424142"></div><div style="left:814px;top:579px;width:16px;height:19px;background:#D6D2CE;box-shadow:inset -1px -1px #424142,inset 1px 1px #D6D2CE,inset -2px -2px #848284,inset 2px 2px #FFFFFF"></div><svg style="position:absolute;left:818px;top:586px" width="7" height="4" viewBox="0 0 7 4" shape-rendering="crispEdges"><path d="M0 0h7v1h-1v1h-1v1h-1v1h-1v-1h-1v-1h-1v-1h-1z" fill="#000000"/></svg><div style="left:209px;top:600px;width:623px;height:98px;background:#FFFFFF;box-shadow:inset -1px -1px #FFFFFF,inset 1px 1px #848284,inset -2px -2px #D6D2CE,inset 2px 2px #424142"></div><div style="left:209px;top:698px;width:623px;height:1px;background:#000000"></div><div style="left:209px;top:699px;width:623px;height:19px;background:#FFF7FF"></div><div class="t" style="left:24px;top:708px;font-size:11px;color:#424142;">Pro...</div><svg style="position:absolute;left:7px;top:700px" width="16" height="16" viewBox="0 0 16 16"><rect x="0.5" y="1.5" width="13" height="11" fill="#FFFFFF" stroke="#5271C5"/><rect x="1" y="2" width="12" height="2" fill="#94B2E6"/><path d="M6 8h8v7H6z" fill="#DEA263" stroke="#946131" stroke-width="0.8"/><circle cx="9" cy="7" r="2" fill="#E62021"/><circle cx="11.5" cy="7.5" r="1.5" fill="#F7D221"/></svg><div style="left:53px;top:702px;width:1px;height:13px;background:#848284"></div><div class="t" style="left:74px;top:708px;font-size:11px;color:#424142;">Cla...</div><svg style="position:absolute;left:57px;top:700px" width="17" height="16" viewBox="0 0 17 16"><path d="M4 0l4 4-4 4-4-4z" fill="#F7F300" stroke="#949200" stroke-width="0.8"/><path d="M12 4l3.5 3.5-3.5 3.5-3.5-3.5z" fill="#E620C5" stroke="#942084" stroke-width="0.8"/><path d="M12 9l3 3-3 3-3-3z" fill="#21D2D6" stroke="#218284" stroke-width="0.8"/><path d="M6 7v6h4" stroke="#848284" fill="none"/></svg><div style="left:103px;top:702px;width:1px;height:13px;background:#848284"></div><div class="t" style="left:124px;top:708px;font-size:11px;color:#424142;">Tools</div><svg style="position:absolute;left:107px;top:700px" width="16" height="16" viewBox="0 0 16 16"><rect x="0.5" y="0.5" width="15" height="15" rx="1" fill="#FFFFFF" stroke="#2171E6" stroke-width="1.2"/><path d="M3 3h4v2H5v10H4V5H3z" fill="#848284"/><rect x="9" y="6" width="3" height="9" fill="#F76121"/><path d="M8 2h5v4H8z" fill="#A5A2A5"/></svg><div style="left:153px;top:698px;width:49px;height:20px;background:#D6D2CE"></div><div style="left:201px;top:698px;width:1px;height:20px;background:#000000"></div><div style="left:153px;top:717px;width:49px;height:1px;background:#000000"></div><svg style="position:absolute;left:155px;top:699px" width="17" height="16" viewBox="0 0 17 16"><rect x="0.5" y="5.5" width="12" height="10" fill="#FFFFFF" stroke="#5271C5"/><path d="M2 9h2M5 9h6M2 12h2M5 12h6" stroke="#5271C5"/><path d="M3 6l5-5 8 3-4 4z" fill="#EFC252" stroke="#846121" stroke-width="0.8"/><path d="M12 2l4 1v3z" fill="#8441C5"/></svg><div class="t" style="left:172px;top:708px;font-size:11px;color:#000000;">Pro...</div><svg style="position:absolute;left:216px;top:701px" width="16" height="15" viewBox="0 0 16 15"><rect x="0.5" y="0.5" width="14" height="13" fill="#FFFFFF" stroke="#2171D6"/><rect x="0.5" y="0.5" width="14" height="2" fill="#2171D6"/><path d="M3 5h9M3 7h9M3 9h9" stroke="#848284"/><path d="M4 12l10-4" stroke="#3182E6" stroke-width="2"/><circle cx="14" cy="8" r="1" fill="#E63121"/></svg><div class="t" style="left:233px;top:708px;font-size:11px;color:#424142;">Task List</div><div style="left:283px;top:698px;width:61px;height:20px;background:#D6D2CE"></div><div style="left:343px;top:698px;width:1px;height:20px;background:#000000"></div><div style="left:283px;top:717px;width:61px;height:1px;background:#000000"></div><svg style="position:absolute;left:286px;top:701px" width="16" height="15" viewBox="0 0 16 15"><rect x="0.5" y="0.5" width="14" height="13" fill="#FFFFFF" stroke="#2171D6"/><rect x="0.5" y="0.5" width="14" height="2" fill="#2171D6"/><path d="M5 3v10" stroke="#2171D6"/><path d="M2 5h2M2 7h2M2 9h2M2 11h2M7 5h6M7 7h6M7 9h6M7 11h6" stroke="#8492A5"/></svg><div class="t" style="left:303px;top:708px;font-size:11px;color:#000000;">Output</div><svg style="position:absolute;left:347px;top:701px" width="16" height="15" viewBox="0 0 16 15" shape-rendering="crispEdges"><rect x="0" y="1" width="16" height="13" fill="#000000" stroke="#4261A5"/><rect x="0" y="1" width="16" height="2" fill="#2151C5"/></svg><div class="t" style="left:348px;top:709px;font-size:8px;font-weight:bold;letter-spacing:0.45px;color:#FFFFFF;font-size:8px">C:\</div><div class="t" style="left:364px;top:708px;font-size:11px;color:#424142;">Console</div><div style="left:408px;top:702px;width:1px;height:13px;background:#848284"></div><div style="left:836px;top:73px;width:1px;height:645px;background:#848284"></div><div style="left:1023px;top:73px;width:1px;height:645px;background:#848284"></div><div class="t" style="left:840px;top:81px;font-size:11px;color:#000000;">Report Explorer</div><svg style="position:absolute;left:994px;top:76px" width="7" height="9" viewBox="0 0 7 9" shape-rendering="crispEdges"><rect x="2" y="0" width="4" height="1" fill="#000000"/><rect x="2" y="0" width="1" height="5" fill="#000000"/><rect x="4" y="0" width="2" height="5" fill="#000000"/><rect x="0" y="5" width="7" height="1" fill="#000000"/><rect x="3" y="6" width="1" height="3" fill="#000000"/></svg><svg style="position:absolute;left:1010px;top:77px" width="7" height="7" viewBox="0 0 7 7" shape-rendering="crispEdges"><rect x="0" y="0" width="1" height="1" fill="#000000"/><rect x="6" y="0" width="1" height="1" fill="#000000"/><rect x="1" y="1" width="1" height="1" fill="#000000"/><rect x="5" y="1" width="1" height="1" fill="#000000"/><rect x="2" y="2" width="1" height="1" fill="#000000"/><rect x="4" y="2" width="1" height="1" fill="#000000"/><rect x="3" y="3" width="1" height="1" fill="#000000"/><rect x="3" y="3" width="1" height="1" fill="#000000"/><rect x="4" y="4" width="1" height="1" fill="#000000"/><rect x="2" y="4" width="1" height="1" fill="#000000"/><rect x="5" y="5" width="1" height="1" fill="#000000"/><rect x="1" y="5" width="1" height="1" fill="#000000"/><rect x="6" y="6" width="1" height="1" fill="#000000"/><rect x="0" y="6" width="1" height="1" fill="#000000"/></svg><div style="left:836px;top:88px;width:188px;height:630px;background:#FFFFFF;box-shadow:inset -1px -1px #FFFFFF,inset 1px 1px #848284,inset -2px -2px #D6D2CE,inset 2px 2px #424142"></div><svg style="position:absolute;left:839px;top:90px" width="184" height="200" viewBox="0 0 184 200" shape-rendering="crispEdges"><path transform="translate(-839,-90)" d="M851 98h1v1h-1zM853 98h1v1h-1zM855 98h1v1h-1zM865 104h1v1h-1zM865 106h1v1h-1zM865 108h1v1h-1zM865 110h1v1h-1zM865 112h1v1h-1zM865 114h1v1h-1zM865 116h1v1h-1zM865 118h1v1h-1zM865 120h1v1h-1zM865 122h1v1h-1zM865 124h1v1h-1zM865 126h1v1h-1zM865 128h1v1h-1zM865 130h1v1h-1zM865 132h1v1h-1zM865 134h1v1h-1zM865 136h1v1h-1zM865 138h1v1h-1zM865 140h1v1h-1zM865 142h1v1h-1zM865 144h1v1h-1zM865 146h1v1h-1zM865 148h1v1h-1zM865 150h1v1h-1zM865 152h1v1h-1zM865 154h1v1h-1zM865 156h1v1h-1zM865 158h1v1h-1zM865 160h1v1h-1zM865 162h1v1h-1zM865 164h1v1h-1zM865 166h1v1h-1zM865 168h1v1h-1zM865 170h1v1h-1zM865 172h1v1h-1zM865 174h1v1h-1zM865 176h1v1h-1zM865 178h1v1h-1zM865 180h1v1h-1zM865 182h1v1h-1zM865 184h1v1h-1zM865 186h1v1h-1zM865 188h1v1h-1zM865 190h1v1h-1zM865 192h1v1h-1zM865 194h1v1h-1zM865 196h1v1h-1zM865 198h1v1h-1zM865 200h1v1h-1zM865 202h1v1h-1zM865 204h1v1h-1zM865 206h1v1h-1zM865 208h1v1h-1zM865 210h1v1h-1zM865 212h1v1h-1zM865 214h1v1h-1zM865 216h1v1h-1zM865 218h1v1h-1zM865 220h1v1h-1zM865 222h1v1h-1zM865 224h1v1h-1zM865 226h1v1h-1zM865 228h1v1h-1zM865 230h1v1h-1zM865 232h1v1h-1zM865 234h1v1h-1zM865 236h1v1h-1zM865 238h1v1h-1zM865 240h1v1h-1zM865 242h1v1h-1zM867 114h1v1h-1zM869 114h1v1h-1zM871 114h1v1h-1zM873 114h1v1h-1zM875 114h1v1h-1zM867 194h1v1h-1zM869 194h1v1h-1zM871 194h1v1h-1zM873 194h1v1h-1zM875 194h1v1h-1zM867 210h1v1h-1zM869 210h1v1h-1zM871 210h1v1h-1zM873 210h1v1h-1zM875 210h1v1h-1zM867 226h1v1h-1zM869 226h1v1h-1zM871 226h1v1h-1zM873 226h1v1h-1zM875 226h1v1h-1zM867 242h1v1h-1zM869 242h1v1h-1zM871 242h1v1h-1zM873 242h1v1h-1zM875 242h1v1h-1zM884 120h1v1h-1zM884 122h1v1h-1zM884 124h1v1h-1zM884 126h1v1h-1zM884 128h1v1h-1zM884 130h1v1h-1zM884 132h1v1h-1zM884 134h1v1h-1zM884 136h1v1h-1zM884 138h1v1h-1zM884 140h1v1h-1zM884 142h1v1h-1zM884 144h1v1h-1zM884 146h1v1h-1zM884 148h1v1h-1zM884 150h1v1h-1zM884 152h1v1h-1zM884 154h1v1h-1zM884 156h1v1h-1zM884 158h1v1h-1zM884 160h1v1h-1zM884 162h1v1h-1zM884 164h1v1h-1zM884 166h1v1h-1zM884 168h1v1h-1zM884 170h1v1h-1zM884 172h1v1h-1zM884 174h1v1h-1zM884 176h1v1h-1zM884 178h1v1h-1zM886 130h1v1h-1zM888 130h1v1h-1zM890 130h1v1h-1zM892 130h1v1h-1zM894 130h1v1h-1zM886 146h1v1h-1zM888 146h1v1h-1zM890 146h1v1h-1zM892 146h1v1h-1zM894 146h1v1h-1zM886 162h1v1h-1zM888 162h1v1h-1zM890 162h1v1h-1zM892 162h1v1h-1zM894 162h1v1h-1zM886 178h1v1h-1zM888 178h1v1h-1zM890 178h1v1h-1zM892 178h1v1h-1zM894 178h1v1h-1z" fill="#848284"/></svg><svg style="position:absolute;left:842px;top:94px" width="9" height="9" viewBox="0 0 9 9" shape-rendering="crispEdges"><rect x="0.5" y="0.5" width="8" height="8" fill="#FFFFFF" stroke="#848284"/><rect x="2" y="4" width="5" height="1" fill="#000000"/></svg><svg style="position:absolute;left:857px;top:91px" width="16" height="14" viewBox="0 0 16 14" shape-rendering="crispEdges"><path d="M3 0h5v1h-5zM6 1h2v1h-2zM8 2h6v1h-6zM13 3h2v1h-2zM13 4h3v1h-3zM15 5h1v1h-1zM15 6h1v1h-1zM15 7h1v1h-1zM15 8h1v1h-1zM15 9h1v1h-1zM15 10h1v1h-1zM15 11h1v1h-1zM0 12h1v1h-1zM14 12h2v1h-2zM0 13h16v1h-16z" fill="#0000DE"/><path d="M2 1h1v1h-1zM1 2h1v1h-1zM7 2h1v1h-1zM0 3h1v1h-1zM7 3h6v1h-6zM0 4h1v1h-1zM12 4h1v1h-1zM0 5h1v1h-1zM2 5h13v1h-13zM0 6h1v1h-1zM2 6h1v1h-1zM0 7h1v1h-1zM2 7h1v1h-1zM12 7h1v1h-1zM14 7h1v1h-1zM0 8h1v1h-1zM2 8h1v1h-1zM12 8h1v1h-1zM14 8h1v1h-1zM0 9h1v1h-1zM2 9h1v1h-1zM12 9h1v1h-1zM14 9h1v1h-1zM0 10h1v1h-1zM2 10h1v1h-1zM12 10h1v1h-1zM14 10h1v1h-1zM0 11h1v1h-1zM2 11h1v1h-1zM12 11h1v1h-1zM14 11h1v1h-1zM1 12h13v1h-13z" fill="#D69629"/><path d="M3 1h3v1h-3zM1 4h6v1h-6zM1 5h1v1h-1zM1 6h1v1h-1zM14 6h1v1h-1zM1 7h1v1h-1zM4 7h8v1h-8zM1 8h1v1h-1zM4 8h8v1h-8zM1 9h1v1h-1zM4 9h8v1h-8zM1 10h1v1h-1zM4 10h8v1h-8zM1 11h1v1h-1zM4 11h8v1h-8z" fill="#FFDF7B"/><path d="M2 2h5v1h-5zM1 3h6v1h-6zM7 4h5v1h-5zM3 6h11v1h-11zM3 7h1v1h-1zM13 7h1v1h-1zM3 8h1v1h-1zM13 8h1v1h-1zM3 9h1v1h-1zM13 9h1v1h-1zM3 10h1v1h-1zM13 10h1v1h-1zM3 11h1v1h-1zM13 11h1v1h-1z" fill="#FFFBCE"/></svg><div class="t" style="left:877px;top:98px;font-size:11px;color:#000000;">Report Explorer</div><svg style="position:absolute;left:861px;top:110px" width="9" height="9" viewBox="0 0 9 9" shape-rendering="crispEdges"><rect x="0.5" y="0.5" width="8" height="8" fill="#FFFFFF" stroke="#848284"/><rect x="2" y="4" width="5" height="1" fill="#000000"/></svg><svg style="position:absolute;left:876px;top:107px" width="16" height="14" viewBox="0 0 16 14" shape-rendering="crispEdges"><path d="M3 0h5v1h-5zM6 1h2v1h-2zM8 2h6v1h-6zM13 3h2v1h-2zM13 4h3v1h-3zM15 5h1v1h-1zM15 6h1v1h-1zM15 7h1v1h-1zM15 8h1v1h-1zM15 9h1v1h-1zM15 10h1v1h-1zM15 11h1v1h-1zM0 12h1v1h-1zM14 12h2v1h-2zM0 13h16v1h-16z" fill="#0000DE"/><path d="M2 1h1v1h-1zM1 2h1v1h-1zM7 2h1v1h-1zM0 3h1v1h-1zM7 3h6v1h-6zM0 4h1v1h-1zM12 4h1v1h-1zM0 5h1v1h-1zM2 5h13v1h-13zM0 6h1v1h-1zM2 6h1v1h-1zM0 7h1v1h-1zM2 7h1v1h-1zM12 7h1v1h-1zM14 7h1v1h-1zM0 8h1v1h-1zM2 8h1v1h-1zM12 8h1v1h-1zM14 8h1v1h-1zM0 9h1v1h-1zM2 9h1v1h-1zM12 9h1v1h-1zM14 9h1v1h-1zM0 10h1v1h-1zM2 10h1v1h-1zM12 10h1v1h-1zM14 10h1v1h-1zM0 11h1v1h-1zM2 11h1v1h-1zM12 11h1v1h-1zM14 11h1v1h-1zM1 12h13v1h-13z" fill="#D69629"/><path d="M3 1h3v1h-3zM1 4h6v1h-6zM1 5h1v1h-1zM1 6h1v1h-1zM14 6h1v1h-1zM1 7h1v1h-1zM4 7h8v1h-8zM1 8h1v1h-1zM4 8h8v1h-8zM1 9h1v1h-1zM4 9h8v1h-8zM1 10h1v1h-1zM4 10h8v1h-8zM1 11h1v1h-1zM4 11h8v1h-8z" fill="#FFDF7B"/><path d="M2 2h5v1h-5zM1 3h6v1h-6zM7 4h5v1h-5zM3 6h11v1h-11zM3 7h1v1h-1zM13 7h1v1h-1zM3 8h1v1h-1zM13 8h1v1h-1zM3 9h1v1h-1zM13 9h1v1h-1zM3 10h1v1h-1zM13 10h1v1h-1zM3 11h1v1h-1zM13 11h1v1h-1z" fill="#FFFBCE"/></svg><div class="t" style="left:896px;top:114px;font-size:11px;color:#000000;">Available Fields</div><svg style="position:absolute;left:897px;top:122px" width="12" height="14" viewBox="0 0 12 14" shape-rendering="crispEdges"><rect x="0" y="1" width="12" height="2" fill="#000084"/><rect x="3" y="5" width="2" height="1" fill="#A5A2A5"/><rect x="3" y="7" width="2" height="1" fill="#A5A2A5"/><rect x="3" y="9" width="2" height="1" fill="#A5A2A5"/><rect x="3" y="11" width="2" height="1" fill="#A5A2A5"/><rect x="6" y="5" width="2" height="1" fill="#A5A2A5"/><rect x="6" y="7" width="2" height="1" fill="#A5A2A5"/><rect x="6" y="9" width="2" height="1" fill="#A5A2A5"/><rect x="6" y="11" width="2" height="1" fill="#A5A2A5"/><rect x="9" y="5" width="2" height="1" fill="#A5A2A5"/><rect x="9" y="7" width="2" height="1" fill="#A5A2A5"/><rect x="9" y="9" width="2" height="1" fill="#A5A2A5"/><rect x="9" y="11" width="2" height="1" fill="#A5A2A5"/></svg><div class="t" style="left:915px;top:130px;font-size:11px;color:#000000;">CategoryID</div><svg style="position:absolute;left:897px;top:138px" width="12" height="14" viewBox="0 0 12 14" shape-rendering="crispEdges"><rect x="0" y="1" width="12" height="2" fill="#000084"/><rect x="3" y="5" width="2" height="1" fill="#A5A2A5"/><rect x="3" y="7" width="2" height="1" fill="#A5A2A5"/><rect x="3" y="9" width="2" height="1" fill="#A5A2A5"/><rect x="3" y="11" width="2" height="1" fill="#A5A2A5"/><rect x="6" y="5" width="2" height="1" fill="#A5A2A5"/><rect x="6" y="7" width="2" height="1" fill="#A5A2A5"/><rect x="6" y="9" width="2" height="1" fill="#A5A2A5"/><rect x="6" y="11" width="2" height="1" fill="#A5A2A5"/><rect x="9" y="5" width="2" height="1" fill="#A5A2A5"/><rect x="9" y="7" width="2" height="1" fill="#A5A2A5"/><rect x="9" y="9" width="2" height="1" fill="#A5A2A5"/><rect x="9" y="11" width="2" height="1" fill="#A5A2A5"/></svg><div class="t" style="left:915px;top:146px;font-size:11px;color:#000000;">CategoryName</div><svg style="position:absolute;left:897px;top:154px" width="12" height="14" viewBox="0 0 12 14" shape-rendering="crispEdges"><rect x="0" y="1" width="12" height="2" fill="#000084"/><rect x="3" y="5" width="2" height="1" fill="#A5A2A5"/><rect x="3" y="7" width="2" height="1" fill="#A5A2A5"/><rect x="3" y="9" width="2" height="1" fill="#A5A2A5"/><rect x="3" y="11" width="2" height="1" fill="#A5A2A5"/><rect x="6" y="5" width="2" height="1" fill="#A5A2A5"/><rect x="6" y="7" width="2" height="1" fill="#A5A2A5"/><rect x="6" y="9" width="2" height="1" fill="#A5A2A5"/><rect x="6" y="11" width="2" height="1" fill="#A5A2A5"/><rect x="9" y="5" width="2" height="1" fill="#A5A2A5"/><rect x="9" y="7" width="2" height="1" fill="#A5A2A5"/><rect x="9" y="9" width="2" height="1" fill="#A5A2A5"/><rect x="9" y="11" width="2" height="1" fill="#A5A2A5"/></svg><div class="t" style="left:915px;top:162px;font-size:11px;color:#000000;">Description</div><svg style="position:absolute;left:897px;top:170px" width="12" height="14" viewBox="0 0 12 14" shape-rendering="crispEdges"><rect x="0" y="1" width="12" height="2" fill="#000084"/><rect x="3" y="5" width="2" height="1" fill="#A5A2A5"/><rect x="3" y="7" width="2" height="1" fill="#A5A2A5"/><rect x="3" y="9" width="2" height="1" fill="#A5A2A5"/><rect x="3" y="11" width="2" height="1" fill="#A5A2A5"/><rect x="6" y="5" width="2" height="1" fill="#A5A2A5"/><rect x="6" y="7" width="2" height="1" fill="#A5A2A5"/><rect x="6" y="9" width="2" height="1" fill="#A5A2A5"/><rect x="6" y="11" width="2" height="1" fill="#A5A2A5"/><rect x="9" y="5" width="2" height="1" fill="#A5A2A5"/><rect x="9" y="7" width="2" height="1" fill="#A5A2A5"/><rect x="9" y="9" width="2" height="1" fill="#A5A2A5"/><rect x="9" y="11" width="2" height="1" fill="#A5A2A5"/></svg><div class="t" style="left:915px;top:178px;font-size:11px;color:#000000;">Picture</div><svg style="position:absolute;left:876px;top:187px" width="16" height="14" viewBox="0 0 16 14" shape-rendering="crispEdges"><path d="M3 0h5v1h-5zM6 1h2v1h-2zM8 2h6v1h-6zM13 3h2v1h-2zM13 4h3v1h-3zM15 5h1v1h-1zM15 6h1v1h-1zM15 7h1v1h-1zM15 8h1v1h-1zM15 9h1v1h-1zM15 10h1v1h-1zM15 11h1v1h-1zM0 12h1v1h-1zM14 12h2v1h-2zM0 13h16v1h-16z" fill="#0000DE"/><path d="M2 1h1v1h-1zM1 2h1v1h-1zM7 2h1v1h-1zM0 3h1v1h-1zM7 3h6v1h-6zM0 4h1v1h-1zM12 4h1v1h-1zM0 5h1v1h-1zM2 5h13v1h-13zM0 6h1v1h-1zM2 6h1v1h-1zM0 7h1v1h-1zM2 7h1v1h-1zM12 7h1v1h-1zM14 7h1v1h-1zM0 8h1v1h-1zM2 8h1v1h-1zM12 8h1v1h-1zM14 8h1v1h-1zM0 9h1v1h-1zM2 9h1v1h-1zM12 9h1v1h-1zM14 9h1v1h-1zM0 10h1v1h-1zM2 10h1v1h-1zM12 10h1v1h-1zM14 10h1v1h-1zM0 11h1v1h-1zM2 11h1v1h-1zM12 11h1v1h-1zM14 11h1v1h-1zM1 12h13v1h-13z" fill="#D69629"/><path d="M3 1h3v1h-3zM1 4h6v1h-6zM1 5h1v1h-1zM1 6h1v1h-1zM14 6h1v1h-1zM1 7h1v1h-1zM4 7h8v1h-8zM1 8h1v1h-1zM4 8h8v1h-8zM1 9h1v1h-1zM4 9h8v1h-8zM1 10h1v1h-1zM4 10h8v1h-8zM1 11h1v1h-1zM4 11h8v1h-8z" fill="#FFDF7B"/><path d="M2 2h5v1h-5zM1 3h6v1h-6zM7 4h5v1h-5zM3 6h11v1h-11zM3 7h1v1h-1zM13 7h1v1h-1zM3 8h1v1h-1zM13 8h1v1h-1zM3 9h1v1h-1zM13 9h1v1h-1zM3 10h1v1h-1zM13 10h1v1h-1zM3 11h1v1h-1zM13 11h1v1h-1z" fill="#FFFBCE"/></svg><div class="t" style="left:896px;top:194px;font-size:11px;color:#000000;">Sorting</div><svg style="position:absolute;left:876px;top:203px" width="16" height="14" viewBox="0 0 16 14" shape-rendering="crispEdges"><path d="M3 0h5v1h-5zM6 1h2v1h-2zM8 2h6v1h-6zM13 3h2v1h-2zM13 4h3v1h-3zM15 5h1v1h-1zM15 6h1v1h-1zM15 7h1v1h-1zM15 8h1v1h-1zM15 9h1v1h-1zM15 10h1v1h-1zM15 11h1v1h-1zM0 12h1v1h-1zM14 12h2v1h-2zM0 13h16v1h-16z" fill="#0000DE"/><path d="M2 1h1v1h-1zM1 2h1v1h-1zM7 2h1v1h-1zM0 3h1v1h-1zM7 3h6v1h-6zM0 4h1v1h-1zM12 4h1v1h-1zM0 5h1v1h-1zM2 5h13v1h-13zM0 6h1v1h-1zM2 6h1v1h-1zM0 7h1v1h-1zM2 7h1v1h-1zM12 7h1v1h-1zM14 7h1v1h-1zM0 8h1v1h-1zM2 8h1v1h-1zM12 8h1v1h-1zM14 8h1v1h-1zM0 9h1v1h-1zM2 9h1v1h-1zM12 9h1v1h-1zM14 9h1v1h-1zM0 10h1v1h-1zM2 10h1v1h-1zM12 10h1v1h-1zM14 10h1v1h-1zM0 11h1v1h-1zM2 11h1v1h-1zM12 11h1v1h-1zM14 11h1v1h-1zM1 12h13v1h-13z" fill="#D69629"/><path d="M3 1h3v1h-3zM1 4h6v1h-6zM1 5h1v1h-1zM1 6h1v1h-1zM14 6h1v1h-1zM1 7h1v1h-1zM4 7h8v1h-8zM1 8h1v1h-1zM4 8h8v1h-8zM1 9h1v1h-1zM4 9h8v1h-8zM1 10h1v1h-1zM4 10h8v1h-8zM1 11h1v1h-1zM4 11h8v1h-8z" fill="#FFDF7B"/><path d="M2 2h5v1h-5zM1 3h6v1h-6zM7 4h5v1h-5zM3 6h11v1h-11zM3 7h1v1h-1zM13 7h1v1h-1zM3 8h1v1h-1zM13 8h1v1h-1zM3 9h1v1h-1zM13 9h1v1h-1zM3 10h1v1h-1zM13 10h1v1h-1zM3 11h1v1h-1zM13 11h1v1h-1z" fill="#FFFBCE"/></svg><div class="t" style="left:896px;top:210px;font-size:11px;color:#000000;">Grouping</div><svg style="position:absolute;left:876px;top:219px" width="16" height="14" viewBox="0 0 16 14" shape-rendering="crispEdges"><path d="M3 0h5v1h-5zM6 1h2v1h-2zM8 2h6v1h-6zM13 3h2v1h-2zM13 4h3v1h-3zM15 5h1v1h-1zM15 6h1v1h-1zM15 7h1v1h-1zM15 8h1v1h-1zM15 9h1v1h-1zM15 10h1v1h-1zM15 11h1v1h-1zM0 12h1v1h-1zM14 12h2v1h-2zM0 13h16v1h-16z" fill="#0000DE"/><path d="M2 1h1v1h-1zM1 2h1v1h-1zM7 2h1v1h-1zM0 3h1v1h-1zM7 3h6v1h-6zM0 4h1v1h-1zM12 4h1v1h-1zM0 5h1v1h-1zM2 5h13v1h-13zM0 6h1v1h-1zM2 6h1v1h-1zM0 7h1v1h-1zM2 7h1v1h-1zM12 7h1v1h-1zM14 7h1v1h-1zM0 8h1v1h-1zM2 8h1v1h-1zM12 8h1v1h-1zM14 8h1v1h-1zM0 9h1v1h-1zM2 9h1v1h-1zM12 9h1v1h-1zM14 9h1v1h-1zM0 10h1v1h-1zM2 10h1v1h-1zM12 10h1v1h-1zM14 10h1v1h-1zM0 11h1v1h-1zM2 11h1v1h-1zM12 11h1v1h-1zM14 11h1v1h-1zM1 12h13v1h-13z" fill="#D69629"/><path d="M3 1h3v1h-3zM1 4h6v1h-6zM1 5h1v1h-1zM1 6h1v1h-1zM14 6h1v1h-1zM1 7h1v1h-1zM4 7h8v1h-8zM1 8h1v1h-1zM4 8h8v1h-8zM1 9h1v1h-1zM4 9h8v1h-8zM1 10h1v1h-1zM4 10h8v1h-8zM1 11h1v1h-1zM4 11h8v1h-8z" fill="#FFDF7B"/><path d="M2 2h5v1h-5zM1 3h6v1h-6zM7 4h5v1h-5zM3 6h11v1h-11zM3 7h1v1h-1zM13 7h1v1h-1zM3 8h1v1h-1zM13 8h1v1h-1zM3 9h1v1h-1zM13 9h1v1h-1zM3 10h1v1h-1zM13 10h1v1h-1zM3 11h1v1h-1zM13 11h1v1h-1z" fill="#FFFBCE"/></svg><div class="t" style="left:896px;top:226px;font-size:11px;color:#000000;">Functions</div><svg style="position:absolute;left:876px;top:235px" width="16" height="14" viewBox="0 0 16 14" shape-rendering="crispEdges"><path d="M3 0h5v1h-5zM6 1h2v1h-2zM8 2h6v1h-6zM13 3h2v1h-2zM13 4h3v1h-3zM15 5h1v1h-1zM15 6h1v1h-1zM15 7h1v1h-1zM15 8h1v1h-1zM15 9h1v1h-1zM15 10h1v1h-1zM15 11h1v1h-1zM0 12h1v1h-1zM14 12h2v1h-2zM0 13h16v1h-16z" fill="#0000DE"/><path d="M2 1h1v1h-1zM1 2h1v1h-1zM7 2h1v1h-1zM0 3h1v1h-1zM7 3h6v1h-6zM0 4h1v1h-1zM12 4h1v1h-1zM0 5h1v1h-1zM2 5h13v1h-13zM0 6h1v1h-1zM2 6h1v1h-1zM0 7h1v1h-1zM2 7h1v1h-1zM12 7h1v1h-1zM14 7h1v1h-1zM0 8h1v1h-1zM2 8h1v1h-1zM12 8h1v1h-1zM14 8h1v1h-1zM0 9h1v1h-1zM2 9h1v1h-1zM12 9h1v1h-1zM14 9h1v1h-1zM0 10h1v1h-1zM2 10h1v1h-1zM12 10h1v1h-1zM14 10h1v1h-1zM0 11h1v1h-1zM2 11h1v1h-1zM12 11h1v1h-1zM14 11h1v1h-1zM1 12h13v1h-13z" fill="#D69629"/><path d="M3 1h3v1h-3zM1 4h6v1h-6zM1 5h1v1h-1zM1 6h1v1h-1zM14 6h1v1h-1zM1 7h1v1h-1zM4 7h8v1h-8zM1 8h1v1h-1zM4 8h8v1h-8zM1 9h1v1h-1zM4 9h8v1h-8zM1 10h1v1h-1zM4 10h8v1h-8zM1 11h1v1h-1zM4 11h8v1h-8z" fill="#FFDF7B"/><path d="M2 2h5v1h-5zM1 3h6v1h-6zM7 4h5v1h-5zM3 6h11v1h-11zM3 7h1v1h-1zM13 7h1v1h-1zM3 8h1v1h-1zM13 8h1v1h-1zM3 9h1v1h-1zM13 9h1v1h-1zM3 10h1v1h-1zM13 10h1v1h-1zM3 11h1v1h-1zM13 11h1v1h-1z" fill="#FFFBCE"/></svg><div class="t" style="left:896px;top:242px;font-size:11px;color:#000000;">Parameters</div><div style="left:1px;top:721px;width:762px;height:18px;border:1px solid #848284"></div><div class="t" style="left:3px;top:730px;font-size:11px;color:#000000;">Ready</div><div style="left:767px;top:721px;width:196px;height:18px;border:1px solid #848284"></div><div style="left:967px;top:721px;width:40px;height:18px;border:1px solid #848284"></div><div style="left:0px;top:741px;width:1024px;height:1px;background:#FFFFFF"></div><div style="left:0px;top:742px;width:1024px;height:26px;background:#D6D2CE"></div><div style="left:2px;top:744px;width:55px;height:22px;background:#D6D2CE;box-shadow:inset -1px -1px #424142,inset 1px 1px #D6D2CE,inset -2px -2px #848284,inset 2px 2px #FFFFFF"></div><svg style="position:absolute;left:4px;top:746px" width="18" height="16" viewBox="0 0 18 16" shape-rendering="crispEdges"><path d="M11 2h4v1h-4zM9 3h8v1h-8zM2 4h1v1h-1zM8 4h2v1h-2zM12 4h2v1h-2zM16 4h1v1h-1zM2 5h1v1h-1zM4 5h6v1h-6zM12 5h2v1h-2zM16 5h1v1h-1zM4 6h5v1h-5zM11 6h3v1h-3zM16 6h2v1h-2zM8 7h1v1h-1zM11 7h4v1h-4zM17 7h1v1h-1zM8 8h10v1h-10zM8 9h2v1h-2zM12 9h2v1h-2zM16 9h2v1h-2zM8 10h2v1h-2zM12 10h2v1h-2zM16 10h2v1h-2zM8 11h1v1h-1zM11 11h4v1h-4zM17 11h1v1h-1zM8 12h1v1h-1zM11 12h4v1h-4zM17 12h1v1h-1zM2 13h1v1h-1zM8 13h10v1h-10zM2 14h1v1h-1zM4 14h7v1h-7zM14 14h4v1h-4zM4 15h5v1h-5zM16 15h2v1h-2z" fill="#000000"/><path d="M10 4h2v1h-2zM10 5h2v1h-2zM9 6h2v1h-2zM2 7h1v1h-1zM9 7h2v1h-2zM2 8h1v1h-1zM4 8h4v1h-4zM4 9h4v1h-4z" fill="#FF0000"/><path d="M14 4h2v1h-2zM14 5h2v1h-2zM14 6h2v1h-2zM15 7h2v1h-2z" fill="#00FF00"/><path d="M10 9h2v1h-2zM2 10h1v1h-1zM10 10h2v1h-2zM2 11h1v1h-1zM4 11h4v1h-4zM9 11h2v1h-2zM4 12h4v1h-4zM9 12h2v1h-2z" fill="#0000FF"/><path d="M14 9h2v1h-2zM14 10h2v1h-2zM15 11h2v1h-2zM15 12h2v1h-2z" fill="#FFFF00"/></svg><div class="t" style="left:23px;top:755px;font-size:11px;font-weight:bold;letter-spacing:0.45px;color:#000000;font-size:12px">Start</div><div style="left:60px;top:744px;width:1px;height:22px;background:#848284"></div><div style="left:61px;top:744px;width:1px;height:22px;background:#FFFFFF"></div><div style="left:64px;top:746px;width:3px;height:18px;box-shadow:inset -1px -1px #848284,inset 1px 1px #FFFFFF"></div><svg style="position:absolute;left:74px;top:748px" width="16" height="16" viewBox="0 0 16 16"><rect x="0.5" y="0.5" width="15" height="15" fill="#4A8AD6"/><circle cx="8" cy="9" r="6" fill="#F7EFDE" stroke="#000000"/><rect x="5" y="6" width="5" height="6" fill="#FFFFFF" stroke="#000000"/><path d="M8 9l6-7" stroke="#E6A221" stroke-width="2"/></svg><svg style="position:absolute;left:97px;top:747px" width="17" height="17" viewBox="0 0 17 17"><ellipse cx="8.5" cy="9" rx="7" ry="6" fill="#3A8EEF"/><ellipse cx="8.5" cy="9" rx="4" ry="3" fill="#FFFFFF"/><path d="M5 9h7" stroke="#3A8EEF" stroke-width="2"/><path d="M1 14c3-7 10-12 15-12" stroke="#3A8EEF" stroke-width="1.5" fill="none"/></svg><svg style="position:absolute;left:120px;top:748px" width="16" height="16" viewBox="0 0 16 16"><rect x="0" y="0" width="16" height="16" fill="#848200"/><circle cx="8" cy="8" r="5" fill="#FFFFFF"/><circle cx="8" cy="8" r="3.5" fill="#848200"/><path d="M8 5v3h2.5" stroke="#FFFFFF" stroke-width="1.3" fill="none"/></svg><svg style="position:absolute;left:143px;top:747px" width="17" height="17" viewBox="0 0 17 17"><path d="M1 3h5l1 1h7v10H1z" fill="#F7E384" stroke="#848242" stroke-width="0.8"/><circle cx="8" cy="8" r="3.5" fill="#A5E3F7" stroke="#212021"/><path d="M10.5 10.5l4 4" stroke="#2141C5" stroke-width="2.2"/></svg><svg style="position:absolute;left:173px;top:749px" width="8" height="6" viewBox="0 0 8 6" shape-rendering="crispEdges"><path d="M0 0h2v1h-2zM4 0h2v1h-2zM1 1h2v1h-2zM5 1h2v1h-2zM2 2h2v1h-2zM6 2h2v1h-2zM2 3h2v1h-2zM6 3h2v1h-2zM1 4h2v1h-2zM5 4h2v1h-2zM0 5h2v1h-2zM4 5h2v1h-2z" fill="#000000"/></svg><div style="left:183px;top:744px;width:1px;height:22px;background:#848284"></div><div style="left:184px;top:744px;width:1px;height:22px;background:#FFFFFF"></div><div style="left:187px;top:746px;width:3px;height:18px;box-shadow:inset -1px -1px #848284,inset 1px 1px #FFFFFF"></div><div style="left:194px;top:744px;width:100px;height:22px;background:#D6D2CE;box-shadow:inset -1px -1px #424142,inset 1px 1px #D6D2CE,inset -2px -2px #848284,inset 2px 2px #FFFFFF"></div><svg style="position:absolute;left:198px;top:747px" width="16" height="16" viewBox="0 0 16 16"><rect x="0" y="0" width="16" height="16" fill="#848200"/><circle cx="8" cy="8" r="5" fill="#FFFFFF"/><circle cx="8" cy="8" r="3.5" fill="#848200"/><path d="M8 5v3h2.5" stroke="#FFFFFF" stroke-width="1.3" fill="none"/></svg><div class="t" style="left:215px;top:756px;font-size:11px;color:#000000;">Inbox - Micro...</div><div style="left:297px;top:744px;width:100px;height:22px;background:#D6D2CE;box-shadow:inset -1px -1px #424142,inset 1px 1px #D6D2CE,inset -2px -2px #848284,inset 2px 2px #FFFFFF"></div><svg style="position:absolute;left:301px;top:746px" width="17" height="17" viewBox="0 0 17 17"><path d="M1 3h5l1 1h7v10H1z" fill="#F7E384" stroke="#848242" stroke-width="0.8"/><circle cx="8" cy="8" r="3.5" fill="#A5E3F7" stroke="#212021"/><path d="M10.5 10.5l4 4" stroke="#2141C5" stroke-width="2.2"/></svg><div class="t" style="left:318px;top:756px;font-size:11px;color:#000000;">C:\</div><div style="left:400px;top:744px;width:100px;height:22px;background:#D6D2CE;box-shadow:inset -1px -1px #424142,inset 1px 1px #D6D2CE,inset -2px -2px #848284,inset 2px 2px #FFFFFF"></div><svg style="position:absolute;left:404px;top:747px" width="16" height="16" viewBox="0 0 16 16"><path d="M5 1h7l3 3v11H5z" fill="#FFFFFF" stroke="#636163"/><ellipse cx="6" cy="9" rx="5" ry="4" fill="#3A8EEF"/><ellipse cx="6" cy="9" rx="2.5" ry="2" fill="#FFFFFF"/></svg><div class="t" style="left:421px;top:756px;font-size:11px;color:#000000;">Download de...</div><div style="left:503px;top:744px;width:100px;height:22px;background:#D6D2CE;box-shadow:inset -1px -1px #424142,inset 1px 1px #D6D2CE,inset -2px -2px #848284,inset 2px 2px #FFFFFF"></div><svg style="position:absolute;left:507px;top:747px" width="16" height="16" viewBox="0 0 16 16"><path d="M3 1h8l3 3v11H3z" fill="#FFFFFF" stroke="#636163"/><rect x="1" y="3" width="8" height="8" fill="#2141C5"/><path d="M2 5l1.5 5 1.5-4 1.5 4 1.5-5" stroke="#FFFFFF" fill="none"/></svg><div class="t" style="left:524px;top:756px;font-size:11px;color:#000000;">readme.doc -...</div><div style="left:606px;top:744px;width:100px;height:22px;background-color:#FFFFFF;background-image:linear-gradient(45deg,#D6D2CE 25%,transparent 25%,transparent 75%,#D6D2CE 75%),linear-gradient(45deg,#D6D2CE 25%,transparent 25%,transparent 75%,#D6D2CE 75%);background-size:2px 2px;background-position:0 0,1px 1px;box-shadow:inset 1px 1px #000000,inset -1px -1px #FFFFFF,inset 2px 2px #848284"></div><svg style="position:absolute;left:609px;top:747px" width="18" height="16" viewBox="0 0 18 16" shape-rendering="crispEdges"><path d="M3 1h1v1h-1zM9 1h1v1h-1zM2 2h1v1h-1zM9 2h1v1h-1zM12 2h1v1h-1zM1 3h2v1h-2zM11 3h3v1h-3zM13 4h2v1h-2zM5 5h2v1h-2zM14 5h1v1h-1zM11 6h1v1h-1zM14 6h1v1h-1zM1 7h1v1h-1zM4 7h1v1h-1zM9 7h2v1h-2zM1 8h1v1h-1zM8 8h1v1h-1zM0 9h1v1h-1zM2 9h2v1h-2zM7 9h1v1h-1zM10 9h2v1h-2zM0 10h1v1h-1zM2 10h1v1h-1zM7 10h2v1h-2zM10 10h1v1h-1zM0 11h1v1h-1zM3 11h2v1h-2zM8 11h1v1h-1zM10 11h1v1h-1zM0 12h1v1h-1zM5 12h1v1h-1zM7 12h1v1h-1zM10 12h1v1h-1zM0 13h1v1h-1zM2 13h1v1h-1zM5 13h1v1h-1zM7 13h1v1h-1zM10 13h1v1h-1zM0 14h2v1h-2zM3 14h2v1h-2zM8 14h3v1h-3zM1 15h7v1h-7zM10 15h3v1h-3z" fill="#000000"/><path d="M4 1h4v1h-4zM10 1h1v1h-1zM3 2h6v1h-6zM10 2h2v1h-2zM3 3h8v1h-8zM1 4h8v1h-8zM11 4h2v1h-2zM1 5h4v1h-4zM2 6h3v1h-3zM2 7h2v1h-2zM5 7h4v1h-4z" fill="#ADAAF7"/><path d="M9 4h2v1h-2zM10 5h4v1h-4zM5 6h6v1h-6zM13 6h1v1h-1zM11 7h2v1h-2zM2 8h6v1h-6zM9 8h4v1h-4zM1 9h1v1h-1zM4 9h3v1h-3zM8 9h2v1h-2zM12 9h3v1h-3zM1 10h1v1h-1zM3 10h4v1h-4zM9 10h1v1h-1zM13 10h2v1h-2zM1 11h2v1h-2zM5 11h3v1h-3zM9 11h1v1h-1zM13 11h2v1h-2zM1 12h4v1h-4zM6 12h1v1h-1zM8 12h2v1h-2zM13 12h2v1h-2zM1 13h1v1h-1zM3 13h2v1h-2zM6 13h1v1h-1zM8 13h2v1h-2zM13 13h1v1h-1zM2 14h1v1h-1zM5 14h3v1h-3zM11 14h2v1h-2z" fill="#FFFFFF"/><path d="M7 5h3v1h-3zM12 10h1v1h-1zM11 11h2v1h-2zM11 12h2v1h-2zM11 13h2v1h-2z" fill="#424184"/><path d="M12 6h1v1h-1zM11 10h1v1h-1z" fill="#F7F321"/><path d="M15 6h1v1h-1zM13 7h1v1h-1zM15 7h1v1h-1zM15 8h1v1h-1zM15 10h1v1h-1zM15 11h1v1h-1zM15 14h1v1h-1zM15 15h2v1h-2z" fill="#A5A2A5"/><path d="M14 7h1v1h-1zM13 8h2v1h-2zM14 13h1v1h-1zM13 14h2v1h-2zM13 15h2v1h-2z" fill="#F76110"/></svg><div class="t" style="left:627px;top:756px;font-size:11px;font-weight:bold;letter-spacing:0.45px;color:#000000;">SharpDevel...</div><div style="left:820px;top:744px;width:202px;height:22px;border:1px solid #848284;border-right-color:#FFFFFF;border-bottom-color:#FFFFFF"></div><svg style="position:absolute;left:824px;top:748px" width="17" height="16" viewBox="0 0 17 16"><path d="M1 6h3l4-4v12l-4-4H1z" fill="#F7E363" stroke="#000000" stroke-width="0.8"/><path d="M10 5l3-2M10 8h4M10 11l3 2" stroke="#A5A2A5"/></svg><svg style="position:absolute;left:842px;top:748px" width="16" height="16" viewBox="0 0 16 16"><rect x="0" y="0" width="16" height="16" fill="#102084"/><circle cx="8" cy="8" r="2" fill="#F7E321"/><path d="M4.5 4.5a5 5 0 0 0 0 7M11.5 4.5a5 5 0 0 1 0 7M3 3a7 7 0 0 0 0 10M13 3a7 7 0 0 1 0 10" stroke="#F7E321" fill="none" stroke-width="1.1"/></svg><svg style="position:absolute;left:861px;top:748px" width="14" height="16" viewBox="0 0 14 16"><path d="M1 15V1h3l6 9V1h3v14h-3L4 6v9z" fill="#F71010"/></svg><svg style="position:absolute;left:878px;top:748px" width="16" height="16" viewBox="0 0 16 16"><path d="M1 9l8-8 6 6-8 8z" fill="#F7E342" stroke="#424100" stroke-width="0.8"/><path d="M3 9l6-6M5 11l6-6" stroke="#848200"/></svg><svg style="position:absolute;left:895px;top:748px" width="17" height="16" viewBox="0 0 17 16"><path d="M1 13c1-8 3-11 8-11h6c2 0 2 2 1 4l-3 8H1z" fill="#E62021" stroke="#840000" stroke-width="0.8"/><text x="3" y="12" font-family="Liberation Sans" font-weight="bold" font-style="italic" font-size="9" fill="#FFFFFF">ATi</text></svg><svg style="position:absolute;left:914px;top:747px" width="17" height="17" viewBox="0 0 17 17"><circle cx="10" cy="11" r="5.5" fill="#FFFFFF" stroke="#000000"/><path d="M8.5 8v6l5-3z" fill="#10A231"/><path d="M1 1l6 6" stroke="#A520C5" stroke-width="2"/><path d="M2 1l5 4" stroke="#F72021"/></svg><svg style="position:absolute;left:932px;top:748px" width="17" height="16" viewBox="0 0 17 16"><rect x="7" y="1" width="8" height="7" fill="#C5C2C5" stroke="#000000"/><rect x="2" y="5" width="8" height="7" fill="#C5C2C5" stroke="#000000"/><rect x="3.5" y="6.5" width="5" height="4" fill="#FFFFFF"/><path d="M1 14h10M6 12v2" stroke="#000000"/></svg><div class="t" style="left:966px;top:756px;font-size:11px;color:#000000;">3:33 PM</div></body></html>
